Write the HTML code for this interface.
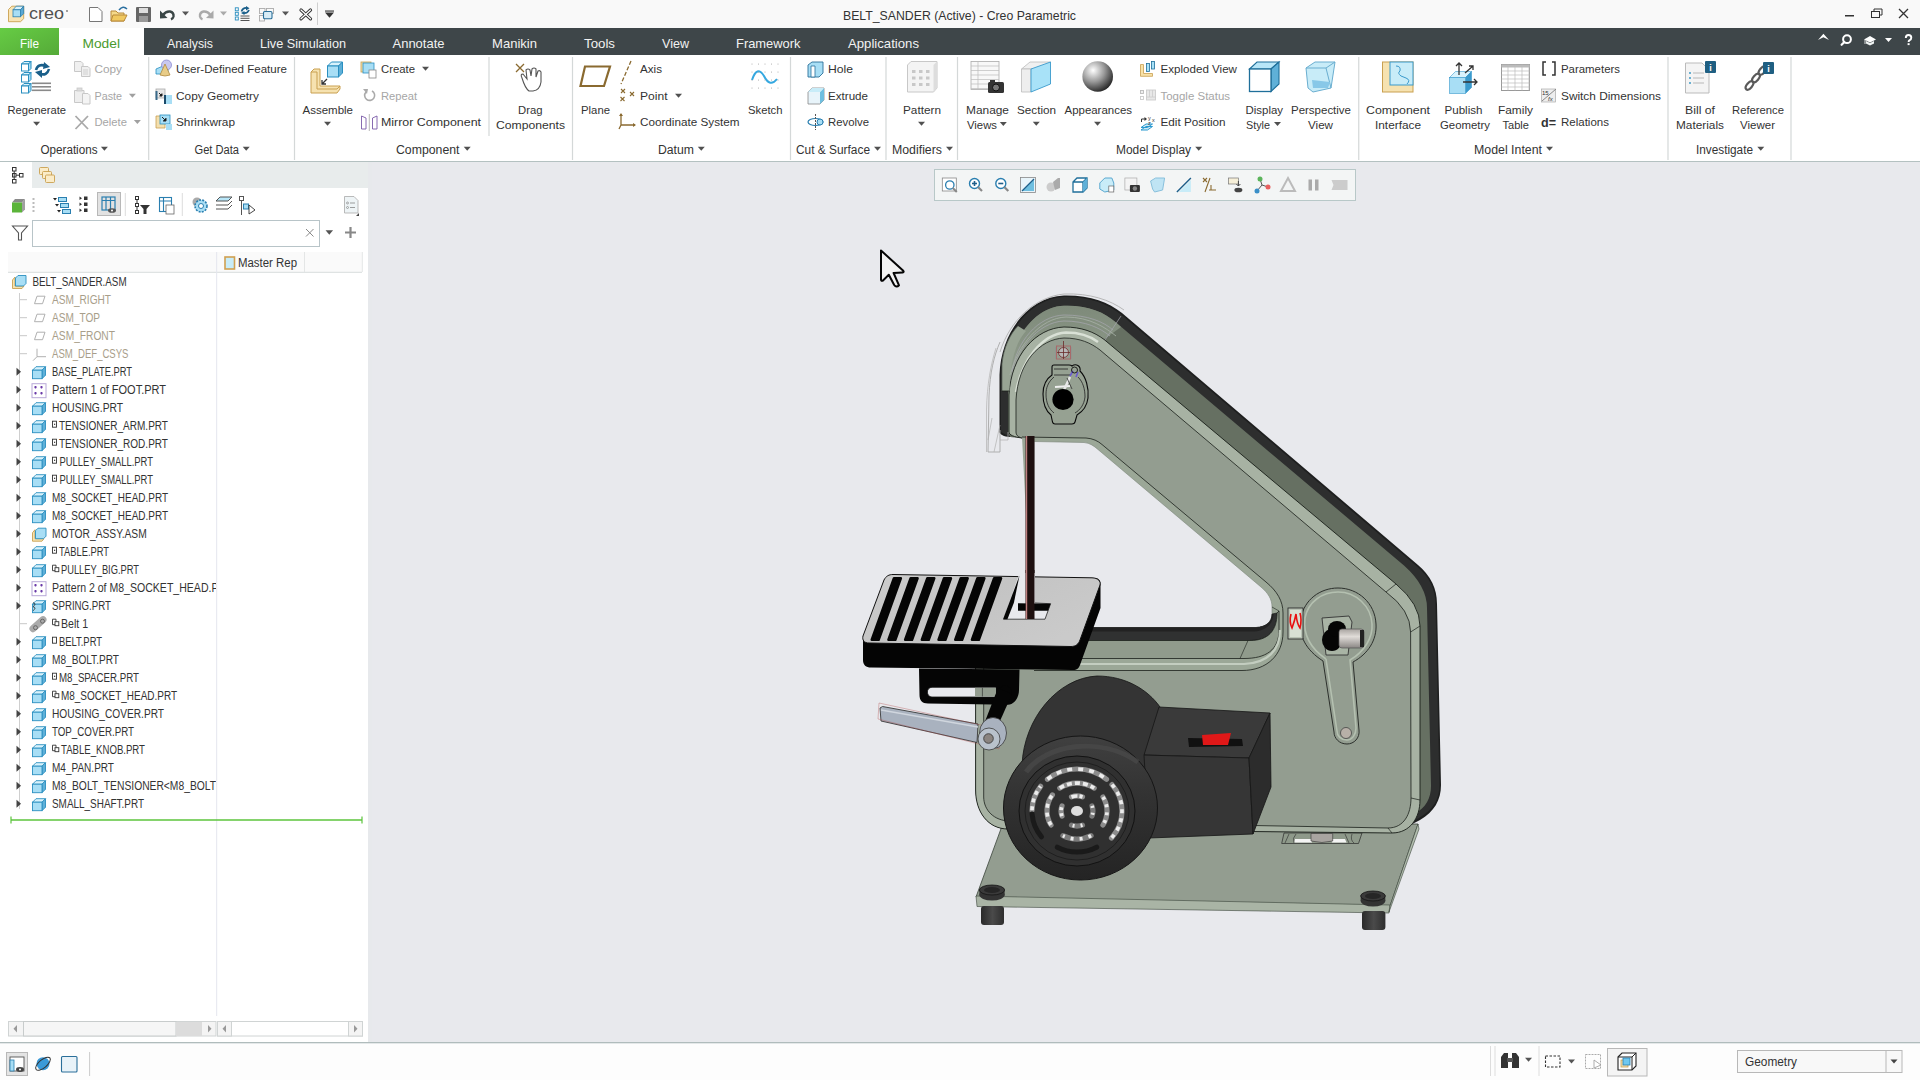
<!DOCTYPE html>
<html><head><meta charset="utf-8"><title>BELT_SANDER (Active) - Creo Parametric</title>
<style>
html,body{margin:0;padding:0;width:1920px;height:1080px;overflow:hidden;background:#e7e8ec;}
svg{position:absolute;left:0;top:0;display:block;}
text{font-family:"Liberation Sans", sans-serif;}
</style></head>
<body>
<svg width="1920" height="1080" viewBox="0 0 1920 1080">
<rect x="0" y="0" width="1920" height="28" fill="#f9f9f9" />
<path d="M8.5,9.5 L11.8,6.2 L23.7,6.2 L23.7,18.7 L20.5,21.7 L8.5,21.7 Z" fill="#f8e4b4" stroke="#c9a050" stroke-width="0.9"/><path d="M13,9.8 L16.2,6.2 L23.7,6.2 L20.5,9.8 Z" fill="#d8f2fc" stroke="#2a7fb0" stroke-width="0.8"/><path d="M20.5,9.8 L23.7,6.2 L23.7,13.5 L20.5,16.8 Z" fill="#5aa8d4" stroke="#2a7fb0" stroke-width="0.8"/><rect x="13" y="9.8" width="7.5" height="7" fill="#a8def5" stroke="#2a7fb0" stroke-width="0.8"/>
<text x="29" y="18.8" font-size="16.5" fill="#505050" text-anchor="start" font-weight="normal" textLength="35" lengthAdjust="spacingAndGlyphs" >creo</text>
<circle cx="67" cy="11" r="0.9" fill="#777"/>
<path d="M89.5,7.5 L98,7.5 L102,11.5 L102,21.5 L89.5,21.5 Z" fill="#fff" stroke="#777" stroke-width="1"/>
<path d="M111,11 L116,11 L118,13 L124,13 L124,21 L111,21 Z" fill="#f5d98a" stroke="#b8893a"/><path d="M113,15 L127,15 L124,21 L111,21 Z" fill="#f0c860" stroke="#b8893a"/><path d="M119,10 Q123,5 127,9" fill="none" stroke="#2a6fa0" stroke-width="1.5"/>
<rect x="136" y="7" width="15" height="15" fill="#666" rx="1"/><rect x="139" y="8" width="9" height="5" fill="#ddd"/><rect x="139" y="16" width="9" height="6" fill="#999"/>
<path d="M163,15 Q166,11 170,11.5 Q174,12.5 173.5,16.5 Q173,18.5 171,19.3" fill="none" stroke="#3a4646" stroke-width="2.4"/><path d="M160,10.5 L160,18.5 L167.5,18 Z" fill="#3a4646"/>
<path d="M182.0,11.5 L189.0,11.5 L185.5,15.5 Z" fill="#555"/>
<path d="M210.5,15 Q207.5,11 203.5,11.5 Q199.5,12.5 200,16.5 Q200.5,18.5 202.5,19.3" fill="none" stroke="#aaa" stroke-width="2.4"/><path d="M213.5,10.5 L213.5,18.5 L206,18 Z" fill="#aaa"/>
<path d="M220.0,11.5 L227.0,11.5 L223.5,15.5 Z" fill="#aaa"/>
<g fill="none" stroke="#2a8fc0" stroke-width="0.9"><rect x="235.3" y="7.8" width="3" height="3"/><rect x="235.3" y="12.3" width="3" height="3"/><rect x="235.3" y="17" width="3" height="3"/></g><g fill="#555"><rect x="240.5" y="15.5" width="9" height="1"/><rect x="240.5" y="17.8" width="9" height="1"/><rect x="240.5" y="20" width="9" height="1"/></g><path d="M241.5,11.5 Q243,7.5 247,8" fill="none" stroke="#1a5f8a" stroke-width="1.8"/><path d="M246,6 L249.5,8.3 L246,10.5 Z" fill="#1a5f8a"/><path d="M249,10 Q247.5,13.5 243.5,13" fill="none" stroke="#1a5f8a" stroke-width="1.8"/><path d="M244.5,11 L241,13 L244.5,15 Z" fill="#1a5f8a"/>
<rect x="259.5" y="8.5" width="5.5" height="5" fill="none" stroke="#aaa" stroke-width="0.9"/><rect x="266.5" y="8.5" width="7" height="5" fill="none" stroke="#aaa" stroke-width="0.9"/><rect x="259.5" y="15.5" width="5" height="5.5" fill="none" stroke="#aaa" stroke-width="0.9"/><rect x="263.5" y="11.5" width="8.5" height="7.3" rx="1.3" fill="#d8ecf6" stroke="#2a6f9a" stroke-width="1.1"/>
<path d="M282.0,11.5 L289.0,11.5 L285.5,15.5 Z" fill="#555"/>
<path d="M301,10 L310.5,18.8 M310.5,10 L301,18.8" stroke="#333" stroke-width="3.2" stroke-linecap="round"/><path d="M301,10 L310.5,18.8 M310.5,10 L301,18.8" stroke="#fff" stroke-width="1.2" stroke-linecap="round"/>
<line x1="317.5" y1="2.5" x2="317.5" y2="25" stroke="#cfcfcf" stroke-width="1" />
<path d="M325,12.5 L334,12.5 L329.5,17.8 Z" fill="#333"/><rect x="325" y="10.5" width="9" height="1.1" fill="#333"/>
<text x="843" y="19.5" font-size="13" fill="#333" text-anchor="start" font-weight="normal" textLength="233" lengthAdjust="spacingAndGlyphs" >BELT_SANDER (Active) - Creo Parametric</text>
<rect x="1845" y="15" width="9" height="1.5" fill="#333" />
<rect x="1871.5" y="11.5" width="8" height="6" fill="none" stroke="#333"/><path d="M1874,11.5 L1874,9 L1882,9 L1882,15 L1880,15" fill="none" stroke="#333"/>
<path d="M1899,9 L1908,18 M1908,9 L1899,18" stroke="#333" stroke-width="1.3"/>
<rect x="0" y="28" width="1920" height="27" fill="#3e4649" />
<defs><linearGradient id="gfile" x1="0" y1="0" x2="1" y2="1"><stop offset="0" stop-color="#66cc44"/><stop offset="1" stop-color="#55aa38"/></linearGradient></defs>
<rect x="0" y="28" width="59" height="27" fill="url(#gfile)" />
<rect x="59" y="28" width="85" height="27" fill="#ffffff" />
<text x="20" y="47.5" font-size="13.5" fill="#fff" text-anchor="start" font-weight="normal" textLength="19" lengthAdjust="spacingAndGlyphs" >File</text>
<text x="82.5" y="47.5" font-size="13.5" fill="#4a9a2e" text-anchor="start" font-weight="normal" textLength="37.5" lengthAdjust="spacingAndGlyphs" >Model</text>
<text x="167" y="47.5" font-size="13.5" fill="#f2f2f2" text-anchor="start" font-weight="normal" textLength="46" lengthAdjust="spacingAndGlyphs" >Analysis</text>
<text x="260" y="47.5" font-size="13.5" fill="#f2f2f2" text-anchor="start" font-weight="normal" textLength="86" lengthAdjust="spacingAndGlyphs" >Live Simulation</text>
<text x="392.5" y="47.5" font-size="13.5" fill="#f2f2f2" text-anchor="start" font-weight="normal" textLength="52.0" lengthAdjust="spacingAndGlyphs" >Annotate</text>
<text x="492" y="47.5" font-size="13.5" fill="#f2f2f2" text-anchor="start" font-weight="normal" textLength="45" lengthAdjust="spacingAndGlyphs" >Manikin</text>
<text x="584" y="47.5" font-size="13.5" fill="#f2f2f2" text-anchor="start" font-weight="normal" textLength="31" lengthAdjust="spacingAndGlyphs" >Tools</text>
<text x="662" y="47.5" font-size="13.5" fill="#f2f2f2" text-anchor="start" font-weight="normal" textLength="27" lengthAdjust="spacingAndGlyphs" >View</text>
<text x="736" y="47.5" font-size="13.5" fill="#f2f2f2" text-anchor="start" font-weight="normal" textLength="64.5" lengthAdjust="spacingAndGlyphs" >Framework</text>
<text x="848" y="47.5" font-size="13.5" fill="#f2f2f2" text-anchor="start" font-weight="normal" textLength="71" lengthAdjust="spacingAndGlyphs" >Applications</text>
<path d="M1818,40 L1823.4,33.8 L1829,40 L1823.4,37.3 Z" fill="#fff"/>
<circle cx="1847" cy="39.2" r="3.9" fill="none" stroke="#fff" stroke-width="2"/><path d="M1844.4,42 L1841.6,44.8" stroke="#fff" stroke-width="2.2" stroke-linecap="round"/>
<path d="M1864,39.5 L1870,36 L1876,39.5 L1870,42.5 Z" fill="#fff"/><path d="M1866,41 L1866,43.5 L1870,45.5 L1874,43.5 L1874,41 L1870,43 Z" fill="#f0f4f4"/><path d="M1865,40 L1865,44" stroke="#fff" stroke-width="0.8"/>
<path d="M1885,38 L1892,38 L1888.5,42 Z" fill="#fff"/>
<path d="M1905.8,38 Q1905.8,35 1908.5,35 Q1911.3,35 1911.3,37.8 Q1911.3,39.6 1909.4,40.4 Q1908.6,40.9 1908.6,42" fill="none" stroke="#fff" stroke-width="1.9"/><rect x="1907.6" y="43.2" width="2" height="1.9" fill="#fff"/>
<rect x="0" y="55" width="1920" height="106" fill="#ffffff" />
<rect x="0" y="161" width="1920" height="1.5" fill="#b4c1c1" />
<line x1="148.7" y1="57" x2="148.7" y2="160" stroke="#d4d8d8" stroke-width="1.2" />
<line x1="294.5" y1="57" x2="294.5" y2="160" stroke="#d4d8d8" stroke-width="1.2" />
<line x1="489" y1="57" x2="489" y2="136" stroke="#d4d8d8" stroke-width="1.2" />
<line x1="572.5" y1="57" x2="572.5" y2="160" stroke="#d4d8d8" stroke-width="1.2" />
<line x1="790.5" y1="57" x2="790.5" y2="160" stroke="#d4d8d8" stroke-width="1.2" />
<line x1="886" y1="57" x2="886" y2="160" stroke="#d4d8d8" stroke-width="1.2" />
<line x1="957.5" y1="57" x2="957.5" y2="160" stroke="#d4d8d8" stroke-width="1.2" />
<line x1="1358.75" y1="57" x2="1358.75" y2="160" stroke="#d4d8d8" stroke-width="1.2" />
<line x1="1668" y1="57" x2="1668" y2="160" stroke="#d4d8d8" stroke-width="1.2" />
<line x1="1791" y1="57" x2="1791" y2="160" stroke="#d4d8d8" stroke-width="1.2" />
<text x="40.5" y="154" font-size="12" fill="#333" text-anchor="start" font-weight="normal" textLength="57.0" lengthAdjust="spacingAndGlyphs" >Operations</text>
<path d="M100.9,146.7 L107.9,146.7 L104.4,150.7 Z" fill="#505050"/>
<text x="194.5" y="154" font-size="12" fill="#333" text-anchor="start" font-weight="normal" textLength="44.5" lengthAdjust="spacingAndGlyphs" >Get Data</text>
<path d="M242.7,146.7 L249.7,146.7 L246.2,150.7 Z" fill="#505050"/>
<text x="396" y="154" font-size="12" fill="#333" text-anchor="start" font-weight="normal" textLength="63.5" lengthAdjust="spacingAndGlyphs" >Component</text>
<path d="M463.7,146.7 L470.7,146.7 L467.2,150.7 Z" fill="#505050"/>
<text x="658" y="154" font-size="12" fill="#333" text-anchor="start" font-weight="normal" textLength="36" lengthAdjust="spacingAndGlyphs" >Datum</text>
<path d="M697.8,146.7 L704.8,146.7 L701.3,150.7 Z" fill="#505050"/>
<text x="796" y="154" font-size="12" fill="#333" text-anchor="start" font-weight="normal" textLength="74" lengthAdjust="spacingAndGlyphs" >Cut &amp; Surface</text>
<path d="M874.0,146.7 L881.0,146.7 L877.5,150.7 Z" fill="#505050"/>
<text x="892" y="154" font-size="12" fill="#333" text-anchor="start" font-weight="normal" textLength="50" lengthAdjust="spacingAndGlyphs" >Modifiers</text>
<path d="M946.0,146.7 L953.0,146.7 L949.5,150.7 Z" fill="#505050"/>
<text x="1116" y="154" font-size="12" fill="#333" text-anchor="start" font-weight="normal" textLength="75" lengthAdjust="spacingAndGlyphs" >Model Display</text>
<path d="M1195.2,146.7 L1202.2,146.7 L1198.7,150.7 Z" fill="#505050"/>
<text x="1474" y="154" font-size="12" fill="#333" text-anchor="start" font-weight="normal" textLength="68" lengthAdjust="spacingAndGlyphs" >Model Intent</text>
<path d="M1546.0,146.7 L1553.0,146.7 L1549.5,150.7 Z" fill="#505050"/>
<text x="1696" y="154" font-size="12" fill="#333" text-anchor="start" font-weight="normal" textLength="57" lengthAdjust="spacingAndGlyphs" >Investigate</text>
<path d="M1757.3,146.7 L1764.3,146.7 L1760.8,150.7 Z" fill="#505050"/>
<text x="7.5" y="113.8" font-size="11.8" fill="#333" text-anchor="start" font-weight="normal" textLength="58.5" lengthAdjust="spacingAndGlyphs" >Regenerate</text>
<path d="M33.1,121.8 L40.1,121.8 L36.6,125.8 Z" fill="#505050"/>
<text x="302.5" y="113.8" font-size="11.8" fill="#333" text-anchor="start" font-weight="normal" textLength="50.5" lengthAdjust="spacingAndGlyphs" >Assemble</text>
<path d="M324.0,121.8 L331.0,121.8 L327.5,125.8 Z" fill="#505050"/>
<text x="518" y="113.8" font-size="11.8" fill="#333" text-anchor="start" font-weight="normal" textLength="24.5" lengthAdjust="spacingAndGlyphs" >Drag</text>
<text x="496" y="128.5" font-size="11.8" fill="#333" text-anchor="start" font-weight="normal" textLength="69" lengthAdjust="spacingAndGlyphs" >Components</text>
<text x="581" y="113.8" font-size="11.8" fill="#333" text-anchor="start" font-weight="normal" textLength="29" lengthAdjust="spacingAndGlyphs" >Plane</text>
<text x="748" y="113.8" font-size="11.8" fill="#333" text-anchor="start" font-weight="normal" textLength="34.5" lengthAdjust="spacingAndGlyphs" >Sketch</text>
<text x="903" y="113.8" font-size="11.8" fill="#333" text-anchor="start" font-weight="normal" textLength="38" lengthAdjust="spacingAndGlyphs" >Pattern</text>
<path d="M918.0,121.8 L925.0,121.8 L921.5,125.8 Z" fill="#505050"/>
<text x="966" y="113.8" font-size="11.8" fill="#333" text-anchor="start" font-weight="normal" textLength="43" lengthAdjust="spacingAndGlyphs" >Manage</text>
<text x="967" y="128.5" font-size="11.8" fill="#333" text-anchor="start" font-weight="normal" textLength="30" lengthAdjust="spacingAndGlyphs" >Views</text>
<path d="M999.8,122.0 L1006.8,122.0 L1003.3,126.0 Z" fill="#505050"/>
<text x="1017" y="113.8" font-size="11.8" fill="#333" text-anchor="start" font-weight="normal" textLength="39" lengthAdjust="spacingAndGlyphs" >Section</text>
<path d="M1032.8,121.8 L1039.8,121.8 L1036.3,125.8 Z" fill="#505050"/>
<text x="1064.5" y="113.8" font-size="11.8" fill="#333" text-anchor="start" font-weight="normal" textLength="67.5" lengthAdjust="spacingAndGlyphs" >Appearances</text>
<path d="M1094.0,121.8 L1101.0,121.8 L1097.5,125.8 Z" fill="#505050"/>
<text x="1245.5" y="113.8" font-size="11.8" fill="#333" text-anchor="start" font-weight="normal" textLength="37.5" lengthAdjust="spacingAndGlyphs" >Display</text>
<text x="1246" y="128.5" font-size="11.8" fill="#333" text-anchor="start" font-weight="normal" textLength="24" lengthAdjust="spacingAndGlyphs" >Style</text>
<path d="M1274.0,122.0 L1281.0,122.0 L1277.5,126.0 Z" fill="#505050"/>
<text x="1291" y="113.8" font-size="11.8" fill="#333" text-anchor="start" font-weight="normal" textLength="60" lengthAdjust="spacingAndGlyphs" >Perspective</text>
<text x="1308" y="128.5" font-size="11.8" fill="#333" text-anchor="start" font-weight="normal" textLength="25" lengthAdjust="spacingAndGlyphs" >View</text>
<text x="1366" y="113.8" font-size="11.8" fill="#333" text-anchor="start" font-weight="normal" textLength="64" lengthAdjust="spacingAndGlyphs" >Component</text>
<text x="1375" y="128.5" font-size="11.8" fill="#333" text-anchor="start" font-weight="normal" textLength="46" lengthAdjust="spacingAndGlyphs" >Interface</text>
<text x="1444.5" y="113.8" font-size="11.8" fill="#333" text-anchor="start" font-weight="normal" textLength="38.0" lengthAdjust="spacingAndGlyphs" >Publish</text>
<text x="1440" y="128.5" font-size="11.8" fill="#333" text-anchor="start" font-weight="normal" textLength="50" lengthAdjust="spacingAndGlyphs" >Geometry</text>
<text x="1498" y="113.8" font-size="11.8" fill="#333" text-anchor="start" font-weight="normal" textLength="35" lengthAdjust="spacingAndGlyphs" >Family</text>
<text x="1502.5" y="128.5" font-size="11.8" fill="#333" text-anchor="start" font-weight="normal" textLength="26.5" lengthAdjust="spacingAndGlyphs" >Table</text>
<text x="1685" y="113.8" font-size="11.8" fill="#333" text-anchor="start" font-weight="normal" textLength="30" lengthAdjust="spacingAndGlyphs" >Bill of</text>
<text x="1676" y="128.5" font-size="11.8" fill="#333" text-anchor="start" font-weight="normal" textLength="48" lengthAdjust="spacingAndGlyphs" >Materials</text>
<text x="1732" y="113.8" font-size="11.8" fill="#333" text-anchor="start" font-weight="normal" textLength="52" lengthAdjust="spacingAndGlyphs" >Reference</text>
<text x="1740" y="128.5" font-size="11.8" fill="#333" text-anchor="start" font-weight="normal" textLength="35" lengthAdjust="spacingAndGlyphs" >Viewer</text>
<text x="94.5" y="73" font-size="11.8" fill="#a6a6a6" text-anchor="start" font-weight="normal" textLength="27.5" lengthAdjust="spacingAndGlyphs" >Copy</text>
<text x="94.5" y="99.5" font-size="11.8" fill="#a6a6a6" text-anchor="start" font-weight="normal" textLength="27.5" lengthAdjust="spacingAndGlyphs" >Paste</text>
<path d="M128.9,93.8 L135.9,93.8 L132.4,97.8 Z" fill="#a0a0a0"/>
<text x="94.5" y="126" font-size="11.8" fill="#a6a6a6" text-anchor="start" font-weight="normal" textLength="32.5" lengthAdjust="spacingAndGlyphs" >Delete</text>
<path d="M133.9,120.0 L140.9,120.0 L137.4,124.0 Z" fill="#a0a0a0"/>
<text x="176" y="73" font-size="11.8" fill="#333" text-anchor="start" font-weight="normal" textLength="111" lengthAdjust="spacingAndGlyphs" >User-Defined Feature</text>
<text x="176" y="99.5" font-size="11.8" fill="#333" text-anchor="start" font-weight="normal" textLength="83" lengthAdjust="spacingAndGlyphs" >Copy Geometry</text>
<text x="176" y="126" font-size="11.8" fill="#333" text-anchor="start" font-weight="normal" textLength="59" lengthAdjust="spacingAndGlyphs" >Shrinkwrap</text>
<text x="381" y="73" font-size="11.8" fill="#333" text-anchor="start" font-weight="normal" textLength="34" lengthAdjust="spacingAndGlyphs" >Create</text>
<path d="M422.0,66.8 L429.0,66.8 L425.5,70.8 Z" fill="#505050"/>
<text x="381" y="99.5" font-size="11.8" fill="#a6a6a6" text-anchor="start" font-weight="normal" textLength="36" lengthAdjust="spacingAndGlyphs" >Repeat</text>
<text x="381" y="126" font-size="11.8" fill="#333" text-anchor="start" font-weight="normal" textLength="100" lengthAdjust="spacingAndGlyphs" >Mirror Component</text>
<text x="640" y="73" font-size="11.8" fill="#333" text-anchor="start" font-weight="normal" textLength="22" lengthAdjust="spacingAndGlyphs" >Axis</text>
<text x="640" y="99.5" font-size="11.8" fill="#333" text-anchor="start" font-weight="normal" textLength="27.5" lengthAdjust="spacingAndGlyphs" >Point</text>
<path d="M675.0,93.8 L682.0,93.8 L678.5,97.8 Z" fill="#505050"/>
<text x="640" y="126" font-size="11.8" fill="#333" text-anchor="start" font-weight="normal" textLength="99.5" lengthAdjust="spacingAndGlyphs" >Coordinate System</text>
<text x="828" y="73" font-size="11.8" fill="#333" text-anchor="start" font-weight="normal" textLength="25" lengthAdjust="spacingAndGlyphs" >Hole</text>
<text x="828" y="99.5" font-size="11.8" fill="#333" text-anchor="start" font-weight="normal" textLength="40" lengthAdjust="spacingAndGlyphs" >Extrude</text>
<text x="828" y="126" font-size="11.8" fill="#333" text-anchor="start" font-weight="normal" textLength="41" lengthAdjust="spacingAndGlyphs" >Revolve</text>
<text x="1160.5" y="73" font-size="11.8" fill="#333" text-anchor="start" font-weight="normal" textLength="76.5" lengthAdjust="spacingAndGlyphs" >Exploded View</text>
<text x="1160.5" y="99.5" font-size="11.8" fill="#a6a6a6" text-anchor="start" font-weight="normal" textLength="69.5" lengthAdjust="spacingAndGlyphs" >Toggle Status</text>
<text x="1160.5" y="126" font-size="11.8" fill="#333" text-anchor="start" font-weight="normal" textLength="65.0" lengthAdjust="spacingAndGlyphs" >Edit Position</text>
<text x="1561" y="73" font-size="11.8" fill="#333" text-anchor="start" font-weight="normal" textLength="59" lengthAdjust="spacingAndGlyphs" >Parameters</text>
<text x="1561" y="99.5" font-size="11.8" fill="#333" text-anchor="start" font-weight="normal" textLength="100" lengthAdjust="spacingAndGlyphs" >Switch Dimensions</text>
<text x="1561" y="126" font-size="11.8" fill="#333" text-anchor="start" font-weight="normal" textLength="48" lengthAdjust="spacingAndGlyphs" >Relations</text>
<path d="M21.5,64.0 L24.0,61.5 L31.0,61.5 L28.5,64.0 Z" fill="#d8f2fc" stroke="#2a8fc0" stroke-width="1" stroke-linejoin="round"/>
<path d="M28.5,64.0 L31.0,61.5 L31.0,68.5 L28.5,71.0 Z" fill="#a8def5" stroke="#2a8fc0" stroke-width="1" stroke-linejoin="round"/>
<rect x="21.5" y="64.0" width="7" height="7" fill="#fff" stroke="#2a8fc0" stroke-width="1"/>
<path d="M21.5,75.0 L24.0,72.5 L31.0,72.5 L28.5,75.0 Z" fill="#d8f2fc" stroke="#2a8fc0" stroke-width="1" stroke-linejoin="round"/>
<path d="M28.5,75.0 L31.0,72.5 L31.0,79.5 L28.5,82.0 Z" fill="#a8def5" stroke="#2a8fc0" stroke-width="1" stroke-linejoin="round"/>
<rect x="21.5" y="75.0" width="7" height="7" fill="#fff" stroke="#2a8fc0" stroke-width="1"/>
<path d="M21.5,86.0 L24.0,83.5 L31.0,83.5 L28.5,86.0 Z" fill="#d8f2fc" stroke="#2a8fc0" stroke-width="1" stroke-linejoin="round"/>
<path d="M28.5,86.0 L31.0,83.5 L31.0,90.5 L28.5,93.0 Z" fill="#a8def5" stroke="#2a8fc0" stroke-width="1" stroke-linejoin="round"/>
<rect x="21.5" y="86.0" width="7" height="7" fill="#fff" stroke="#2a8fc0" stroke-width="1"/>
<rect x="32" y="82.5" width="19" height="1.6" fill="#8a8a8a" />
<rect x="32" y="86" width="19" height="1.6" fill="#8a8a8a" />
<rect x="32" y="89.5" width="19" height="1.6" fill="#8a8a8a" />
<path d="M36,70 Q38,63 46,66" fill="none" stroke="#1a5f8a" stroke-width="2.6"/><path d="M44,62 L50,67 L43,69 Z" fill="#1a5f8a"/><path d="M49,69 Q47,76 40,74" fill="none" stroke="#1a5f8a" stroke-width="2.6"/><path d="M42,78 L35,72 L42,70 Z" fill="#1a5f8a"/>
<path d="M74.5,61.5 L81,61.5 L83,63.5 L83,71.5 L74.5,71.5 Z" fill="#f0f0f0" stroke="#c8c8c8"/><path d="M81.5,66.5 L88,66.5 L90,68.5 L90,76.5 L81.5,76.5 Z" fill="#f0f0f0" stroke="#c8c8c8"/><path d="M83,70 L88,70 M83,72 L88,72 M83,74 L88,74" stroke="#c8c8c8" stroke-width="0.8"/>
<path d="M74.5,90.5 L84,90.5 L84,102.5 L74.5,102.5 Z" fill="#eee" stroke="#c8c8c8"/><rect x="77" y="88" width="5" height="3" fill="#ddd" stroke="#c8c8c8" stroke-width="0.8"/><path d="M82.5,93.5 L88,93.5 L90,95.5 L90,104 L82.5,104 Z" fill="#f4f4f4" stroke="#c8c8c8"/>
<path d="M75.5,116 L88,129 M88,116 L75.5,129" stroke="#a9a9a9" stroke-width="1.8"/>
<path d="M156,69 L163,66 L168,69 L168,74 L156,74 Z" fill="#a8def5" stroke="#2a8fc0" stroke-width="0.8"/><circle cx="166.5" cy="65" r="5" fill="#c8c8f0" stroke="#8a8ad0" stroke-width="0.8"/><path d="M165,64 L170,75 Q165,77 160,75 Z" fill="#e8cc88" stroke="#b08a40" stroke-width="0.8"/>
<rect x="156" y="89" width="9" height="9" fill="#e6e6e6" stroke="#aaa" stroke-width="0.8"/><rect x="155.5" y="91" width="2" height="9" fill="#3a6a8a"/><rect x="164" y="95" width="8" height="9" fill="#a8def5"/><rect x="164" y="95" width="2" height="9" fill="#1b4a6a"/><path d="M159,93 L162,96 M162,93.5 L162,96 L159.5,96" stroke="#222" stroke-width="1"/>
<path d="M156,116 L165,116 L165,128 L156,128 Z" fill="#f3dfae" stroke="#c9a050" stroke-width="0.8"/><rect x="160" y="115" width="10" height="9" fill="#a8def5" stroke="#2a8fc0" stroke-width="0.8"/><rect x="166" y="124" width="6" height="6" fill="#a8def5"/><path d="M162,117 L166,121 M166,118 L166,121 L163,121" stroke="#222" stroke-width="1"/>
<path d="M311,72 L314,69 L320,69 L320,86 L340,86 L340,89 L337,93 L311,93 Z" fill="#f6e2b0" stroke="#c9a050" stroke-width="1"/><path d="M311,72 L317,72 L317,89 L337,89 L340,86" fill="none" stroke="#c9a050" stroke-width="1"/>
<path d="M327.5,66 L331.5,62 L342.5,62 L338.5,66 Z" fill="#d8f2fc" stroke="#2a8fc0" stroke-width="1" stroke-linejoin="round"/>
<path d="M338.5,66 L342.5,62 L342.5,73 L338.5,77 Z" fill="#5fb0d8" stroke="#2a8fc0" stroke-width="1" stroke-linejoin="round"/>
<rect x="327.5" y="66" width="11" height="11" fill="#a8def5" stroke="#2a8fc0" stroke-width="1"/>
<path d="M327,79 L322,84 M322,80 L322,84 L326,84" stroke="#333" stroke-width="1.3" fill="none"/>
<rect x="361" y="62" width="10" height="10" fill="#f3dfae" stroke="#c9a050" stroke-width="0.8"/><rect x="363" y="63" width="11" height="10" fill="#a8def5" stroke="#2a8fc0" stroke-width="0.8"/><rect x="369" y="70" width="7" height="8" fill="#fff" stroke="#888" stroke-width="0.8"/>
<path d="M366,92 A5,5 0 1,0 372,91" fill="none" stroke="#aaa" stroke-width="1.6"/><path d="M363,89 L368,89 L367,94 Z" fill="#aaa"/>
<path d="M361.5,116 L366,118 L366,129 L361.5,129 Z" fill="none" stroke="#7a5aa8" stroke-width="0.9"/><path d="M377,116 L372.5,118 L372.5,129 L377,129 Z" fill="none" stroke="#7a5aa8" stroke-width="0.9"/><line x1="369.3" y1="114" x2="369.3" y2="131" stroke="#999" stroke-width="0.7"/>
<path d="M516,64 L524,72 M524,64 L516,72" stroke="#8a6a30" stroke-width="1.3"/><path d="M522,78 Q520,74 523,74 L527,79 L526,70 Q528,68 530,70 L531,76 L532,69 Q534,67 536,69 L536,77 L538,71 Q540,70 541,72 L541,82 Q540,90 533,91 L529,91 Q525,88 522,78 Z" fill="#fff" stroke="#555" stroke-width="1.1"/>
<path d="M585,66.5 L610,66.5 L604,86 L580.5,86 Z" fill="none" stroke="#8a6a30" stroke-width="2.2"/>
<path d="M631,61 L621,84" stroke="#8a6a30" stroke-width="1.3" stroke-dasharray="4,2"/>
<g stroke="#8a6a30" stroke-width="1.1"><path d="M621,89 L625,93 M625,89 L621,93"/><path d="M630,92 L634,96 M634,92 L630,96"/><path d="M620.5,97 L624.5,101 M624.5,97 L620.5,101"/></g>
<path d="M621,114 L621,125 L635,125 M621,125 L619,129" fill="none" stroke="#8a6a30" stroke-width="1.3"/><path d="M619,116 L621,113 L623,116 Z M633,123 L636,125 L633,127 Z" fill="#8a6a30"/>
<path d="M752,80 Q757,65 764,76 Q770,88 777,79" fill="none" stroke="#35a8e0" stroke-width="2"/>
<circle cx="752.0" cy="64" r="0.5" fill="#999"/>
<circle cx="752.0" cy="72" r="0.5" fill="#999"/>
<circle cx="752.0" cy="80" r="0.5" fill="#999"/>
<circle cx="752.0" cy="88" r="0.5" fill="#999"/>
<circle cx="758.5" cy="64" r="0.5" fill="#999"/>
<circle cx="758.5" cy="72" r="0.5" fill="#999"/>
<circle cx="758.5" cy="80" r="0.5" fill="#999"/>
<circle cx="758.5" cy="88" r="0.5" fill="#999"/>
<circle cx="765.0" cy="64" r="0.5" fill="#999"/>
<circle cx="765.0" cy="72" r="0.5" fill="#999"/>
<circle cx="765.0" cy="80" r="0.5" fill="#999"/>
<circle cx="765.0" cy="88" r="0.5" fill="#999"/>
<circle cx="771.5" cy="64" r="0.5" fill="#999"/>
<circle cx="771.5" cy="72" r="0.5" fill="#999"/>
<circle cx="771.5" cy="80" r="0.5" fill="#999"/>
<circle cx="771.5" cy="88" r="0.5" fill="#999"/>
<circle cx="778.0" cy="64" r="0.5" fill="#999"/>
<circle cx="778.0" cy="72" r="0.5" fill="#999"/>
<circle cx="778.0" cy="80" r="0.5" fill="#999"/>
<circle cx="778.0" cy="88" r="0.5" fill="#999"/>
<path d="M808,65 L812,62 L823,62 L823,73 L819,77 L808,77 Z" fill="#a8def5" stroke="#2a6f9a" stroke-width="0.9"/><path d="M811,66 L815,66 L815,77 L811,77 Z" fill="#fff" stroke="#2a6f9a" stroke-width="0.8"/>
<path d="M808,92 L812,88 L824,88 L824,100 L820,104 L808,104 Z" fill="#e8f4fa" stroke="#888" stroke-width="0.8"/><path d="M820,92 L824,88 L824,100 L820,104 Z" fill="#6fbfe0"/><path d="M808,92 L812,88 L824,88 L820,92 Z" fill="#c8ecf8"/>
<ellipse cx="815.5" cy="122" rx="7.5" ry="3.5" fill="none" stroke="#2a7fb0" stroke-width="1.2"/><circle cx="820" cy="122" r="3" fill="#a8def5" stroke="#2a7fb0"/><line x1="815.5" y1="114" x2="815.5" y2="130" stroke="#555" stroke-dasharray="2,1"/>
<path d="M907.5,65 L911,61.5 L937,61.5 L937,88 L933.5,92 L907.5,92 Z" fill="#f4f4f4" stroke="#c8c8c8"/><path d="M933.5,65 L937,61.5 L937,88 L933.5,92 Z" fill="#ddd"/>
<rect x="912" y="70.0" width="3.5" height="3" fill="#c8c8c8" />
<rect x="912" y="76.5" width="3.5" height="3" fill="#c8c8c8" />
<rect x="912" y="83.0" width="3.5" height="3" fill="#c8c8c8" />
<rect x="919" y="70.0" width="3.5" height="3" fill="#c8c8c8" />
<rect x="919" y="76.5" width="3.5" height="3" fill="#c8c8c8" />
<rect x="919" y="83.0" width="3.5" height="3" fill="#c8c8c8" />
<rect x="926" y="70.0" width="3.5" height="3" fill="#c8c8c8" />
<rect x="926" y="76.5" width="3.5" height="3" fill="#c8c8c8" />
<rect x="926" y="83.0" width="3.5" height="3" fill="#c8c8c8" />
<rect x="971" y="61.5" width="28" height="28" fill="#f8f8f8" stroke="#aaa" stroke-width="0.8"/>
<line x1="971" y1="66.0" x2="999" y2="66.0" stroke="#bbb" stroke-width="0.7" />
<line x1="971" y1="70.5" x2="999" y2="70.5" stroke="#bbb" stroke-width="0.7" />
<line x1="971" y1="75.0" x2="999" y2="75.0" stroke="#bbb" stroke-width="0.7" />
<line x1="971" y1="79.5" x2="999" y2="79.5" stroke="#bbb" stroke-width="0.7" />
<line x1="971" y1="84.0" x2="999" y2="84.0" stroke="#bbb" stroke-width="0.7" />
<line x1="971" y1="88.5" x2="999" y2="88.5" stroke="#bbb" stroke-width="0.7" />
<line x1="978" y1="61.5" x2="978" y2="89.5" stroke="#bbb" stroke-width="0.7" />
<rect x="988" y="82" width="16" height="11" rx="1.5" fill="#333"/><circle cx="996" cy="87.5" r="3.5" fill="#777" stroke="#111"/><rect x="990" y="80" width="5" height="3" fill="#333"/>
<path d="M1021.5,69 L1030,62 L1050.5,62 L1042,69 Z" fill="#f0f0f0" stroke="#bbb" stroke-width="0.8"/><path d="M1021.5,69 L1031,69 L1031,92 L1021.5,92 Z" fill="#eee" stroke="#bbb" stroke-width="0.8"/><path d="M1031,69 L1050.5,62 L1050.5,84 L1031,92 Z" fill="#a8e2f8" stroke="#3a9acc" stroke-width="0.9"/>
<defs><radialGradient id="gsph" cx="0.35" cy="0.3" r="0.75"><stop offset="0" stop-color="#ffffff"/><stop offset="0.5" stop-color="#999"/><stop offset="1" stop-color="#222"/></radialGradient></defs><circle cx="1097.7" cy="76.5" r="15.3" fill="url(#gsph)"/>
<path d="M1140.5,64.5 L1143.5,64.5 L1143.5,73.5 L1152.5,73.5 L1152.5,76.3 L1140.5,76.3 Z" fill="#f8e2a8" stroke="#c9a050" stroke-width="0.8"/><rect x="1146.5" y="63.5" width="3" height="8" fill="#a8e2f8" stroke="#1f6f9a" stroke-width="0.8"/><rect x="1151.5" y="61.5" width="3" height="7.5" fill="#a8e2f8" stroke="#1f6f9a" stroke-width="0.8"/>
<rect x="1140.5" y="90.5" width="3" height="3" fill="none" stroke="#bbb" stroke-width="0.9"/><rect x="1141.6" y="91.6" width="0.8" height="0.8" fill="#999"/><rect x="1140.5" y="96.5" width="3" height="3" fill="none" stroke="#ccc" stroke-width="0.9"/><rect x="1146.5" y="90" width="9" height="10" fill="#e8e8e8" stroke="#ccc" stroke-width="0.9"/><path d="M1149.5,90 L1149.5,97 M1152.5,90 L1152.5,97 M1146.5,97 L1155.5,97" stroke="#ccc" stroke-width="0.8"/>
<path d="M1141,127.5 L1146,124 L1152.5,124 L1147.5,127.5 Z M1141,130 L1146,126.5 L1152.5,126.5 L1147.5,130 Z" fill="#cfe9f5" stroke="#2a9ad0" stroke-width="1"/><path d="M1141.5,122 L1141.5,119 L1145,119" fill="none" stroke="#333" stroke-width="1"/><path d="M1144.5,117 L1147,119 L1144.5,121 Z" fill="#333"/><text x="1148" y="120" font-size="5.5" fill="#333">y</text><text x="1148" y="125" font-size="5.5" fill="#333">z</text><text x="1152" y="122" font-size="5.5" fill="#333">x</text>
<path d="M1249.5,69 L1257,62 L1279,62 L1271,69 Z" fill="#b8e6f8" stroke="#1f6f9a" stroke-width="1.1"/><path d="M1271,69 L1279,62 L1279,84 L1271,91.5 Z" fill="#5fb0d8" stroke="#1f6f9a" stroke-width="1.1"/><rect x="1249.5" y="69" width="21.5" height="22.5" fill="#fff" stroke="#1f6f9a" stroke-width="1.3"/>
<path d="M1306,68 L1315,62 L1335,62 L1331,88 L1313,92 L1308,88 Z" fill="#c8ecf8" stroke="#6aaed0" stroke-width="1"/><path d="M1306,68 L1326,68 L1331,88 M1326,68 L1335,62" fill="none" stroke="#6aaed0" stroke-width="1"/><path d="M1312,80 L1330,82 L1328,88 L1313,88 Z" fill="#88c8e8"/>
<rect x="1382.5" y="62" width="30.5" height="30" fill="#f6e2b0" stroke="#c9a050"/><rect x="1390" y="62" width="23" height="23" fill="#c8ecf8" stroke="#3a9acc"/><path d="M1396,66 Q1401,66 1400,71 Q1397,73 1401,76 L1406,78 Q1411,80 1407,84" fill="none" stroke="#3a9acc" stroke-width="1"/>
<path d="M1449.5,77.5 L1455.5,71.5 L1471.5,71.5 L1465.5,77.5 Z" fill="#d8f2fc" stroke="#3a9acc" stroke-width="0.6" stroke-linejoin="round"/>
<path d="M1465.5,77.5 L1471.5,71.5 L1471.5,87.5 L1465.5,93.5 Z" fill="#3a9acc" stroke="#3a9acc" stroke-width="0.6" stroke-linejoin="round"/>
<rect x="1449.5" y="77.5" width="16" height="16" fill="#a8def5" stroke="#3a9acc" stroke-width="0.6"/>
<path d="M1459,75 L1459,63 M1456,66 L1459,63 L1462,66 M1465,73 L1473,66 M1469,66 L1473,66 L1473,70 M1463,82 L1477,82 M1474,79 L1477,82 L1474,85" fill="none" stroke="#333" stroke-width="1.3"/>
<rect x="1501.5" y="64.5" width="28" height="26" fill="#fff" stroke="#999"/><rect x="1501.5" y="64.5" width="28" height="3" fill="#bbb"/>
<line x1="1501.5" y1="71" x2="1529.5" y2="71" stroke="#bbb" stroke-width="0.7" />
<line x1="1501.5" y1="75" x2="1529.5" y2="75" stroke="#bbb" stroke-width="0.7" />
<line x1="1501.5" y1="79" x2="1529.5" y2="79" stroke="#bbb" stroke-width="0.7" />
<line x1="1501.5" y1="83" x2="1529.5" y2="83" stroke="#bbb" stroke-width="0.7" />
<line x1="1501.5" y1="87" x2="1529.5" y2="87" stroke="#bbb" stroke-width="0.7" />
<line x1="1508" y1="64.5" x2="1508" y2="90.5" stroke="#bbb" stroke-width="0.7" />
<line x1="1515" y1="64.5" x2="1515" y2="90.5" stroke="#bbb" stroke-width="0.7" />
<line x1="1522" y1="64.5" x2="1522" y2="90.5" stroke="#bbb" stroke-width="0.7" />
<line x1="1529" y1="64.5" x2="1529" y2="90.5" stroke="#bbb" stroke-width="0.7" />
<path d="M1546,62 L1543,62 L1543,75 L1546,75 M1552,62 L1555,62 L1555,75 L1552,75" fill="none" stroke="#333" stroke-width="1.5"/>
<rect x="1541.5" y="89" width="14" height="13" fill="#eee" stroke="#aaa" stroke-width="0.7"/><path d="M1542,101 L1556,89" stroke="#888"/><text x="1542" y="95" font-size="6" fill="#333">15</text><text x="1548" y="101" font-size="6" fill="#333" font-style="italic">fx</text>
<text x="1541" y="127" font-size="13" font-weight="bold" fill="#333" textLength="15" lengthAdjust="spacingAndGlyphs">d=</text>
<path d="M1685.5,63 L1702,63 L1709,70 L1709,93 L1685.5,93 Z" fill="#f4f4f4" stroke="#bbb"/>
<circle cx="1690" cy="73" r="0.9" fill="#2a8fc0"/>
<line x1="1693" y1="73" x2="1704" y2="73" stroke="#aaa" stroke-width="0.8" />
<circle cx="1690" cy="78" r="0.9" fill="#2a8fc0"/>
<line x1="1693" y1="78" x2="1704" y2="78" stroke="#aaa" stroke-width="0.8" />
<circle cx="1690" cy="83" r="0.9" fill="#2a8fc0"/>
<line x1="1693" y1="83" x2="1704" y2="83" stroke="#aaa" stroke-width="0.8" />
<rect x="1705" y="61" width="11" height="12" rx="1" fill="#1f5f82"/><text x="1710.5" y="70.5" font-size="9" font-weight="bold" fill="#fff" text-anchor="middle">i</text>
<g fill="none" stroke="#5a5a5a" stroke-width="2.2"><ellipse cx="1749.5" cy="85.5" rx="5" ry="2.6" transform="rotate(-50 1749.5 85.5)"/><ellipse cx="1756" cy="78" rx="5" ry="2.6" transform="rotate(-50 1756 78)"/><ellipse cx="1762.5" cy="70.5" rx="5" ry="2.6" transform="rotate(-50 1762.5 70.5)"/></g>
<rect x="1763" y="62" width="11" height="12" rx="1" fill="#1f5f82"/><text x="1768.5" y="71.5" font-size="9" font-weight="bold" fill="#fff" text-anchor="middle">i</text>
<rect x="0" y="162" width="368" height="880" fill="#ffffff" />
<rect x="32" y="162" width="336" height="26" fill="#e8ecec" />
<rect x="368" y="162" width="4" height="880" fill="#e7e9ec" />
<g fill="none" stroke="#333" stroke-width="1"><rect x="12.5" y="167.5" width="3.5" height="3.5"/><rect x="12.5" y="173.5" width="3.5" height="3.5"/><rect x="12.5" y="179.5" width="3.5" height="3.5"/><rect x="19.5" y="173.5" width="3.5" height="3.5"/><path d="M14.2,171 L14.2,179.5 M16,175.2 L19.5,175.2"/></g>
<g stroke="#c9a050" stroke-width="0.9" fill="#fbecc8"><rect x="39.5" y="167.5" width="9" height="7" rx="1"/><rect x="42.5" y="171.5" width="9" height="7" rx="1"/><rect x="45.5" y="175" width="9" height="7.5" rx="1"/></g>
<path d="M12,202.5 L15,199 L25,199 L22,202.5 Z" fill="#8a8a8a"/><path d="M22,202.5 L25,199 L25,209.5 L22,212.5 Z" fill="#a0a0a0"/><rect x="12" y="202.5" width="10" height="10" fill="#5bb43a"/>
<rect x="32.5" y="198" width="2" height="2" fill="#bbb" />
<rect x="32.5" y="202" width="2" height="2" fill="#bbb" />
<rect x="32.5" y="206" width="2" height="2" fill="#bbb" />
<rect x="32.5" y="210" width="2" height="2" fill="#bbb" />
<g fill="#a8def5" stroke="#2a7fb0" stroke-width="1"><rect x="58.5" y="197.5" width="8" height="4"/><rect x="60.5" y="203.5" width="8" height="4"/><rect x="62.5" y="209.5" width="8" height="4"/></g><path d="M53,198 L57,198 L55,200.5 Z M55,204 L59,204 L57,206.5 Z M57,210 L61,210 L59,212.5 Z" fill="#222"/>
<g fill="#333"><rect x="84" y="196.5" width="3.5" height="3.5"/><rect x="84" y="202.5" width="3.5" height="3.5"/><rect x="84" y="208.5" width="3.5" height="3.5"/><path d="M79.5,196.5 L82,198.2 L79.5,200 Z M79.5,202.5 L82,204.2 L79.5,206 Z M79.5,208.5 L82,210.2 L79.5,212 Z"/></g>
<rect x="97.5" y="192.5" width="23" height="23" fill="#e2e2e2" stroke="#b8b8b8"/><g fill="none" stroke="#2a7fb0" stroke-width="1.2"><rect x="102" y="197" width="13" height="13"/><path d="M102,200.5 L115,200.5 M106,197 L106,210 M110.5,197 L110.5,210"/></g><ellipse cx="112" cy="210.5" rx="4" ry="2.3" fill="#555"/><circle cx="112" cy="210.5" r="1" fill="#fff"/>
<line x1="125.3" y1="193" x2="125.3" y2="216" stroke="#ddd" stroke-width="1" />
<g fill="none" stroke="#333" stroke-width="1"><rect x="135.5" y="196.5" width="3" height="3"/><rect x="135.5" y="203.5" width="3" height="3"/><rect x="135.5" y="210.5" width="3" height="3"/><path d="M137,199.5 L137,203.5 M137,206.5 L137,210.5"/></g><path d="M140,205 L150,205 L146.5,209 L146.5,214 L143.5,214 L143.5,209 Z" fill="#333"/>
<g fill="none" stroke="#2a7fb0" stroke-width="1.1"><rect x="159.5" y="197.5" width="12" height="14"/><path d="M159.5,201 L171.5,201 M163.5,197.5 L163.5,211.5"/></g><rect x="166" y="205" width="8" height="9" fill="#fff" stroke="#666" stroke-width="0.8"/>
<line x1="182.3" y1="193" x2="182.3" y2="216" stroke="#ddd" stroke-width="1" />
<circle cx="197" cy="202" r="4.5" fill="#aaa"/><circle cx="201" cy="206" r="6" fill="#a8def5" stroke="#2a7fb0" stroke-width="1.6" stroke-dasharray="2,1.2"/><circle cx="201" cy="206" r="2.5" fill="#fff" stroke="#2a7fb0"/>
<g stroke="#555" stroke-width="1" fill="#b8e6f8"><path d="M216,201 L220,197 L232,197 L228,201 Z"/></g><path d="M216,205 L228,205 L232,201 M216,209 L228,209 L232,205" fill="none" stroke="#555"/>
<rect x="239.5" y="196.5" width="4" height="4" fill="none" stroke="#555"/><path d="M241.5,200.5 L241.5,215" stroke="#555"/><rect x="243.5" y="204" width="5" height="5" fill="#a8def5" stroke="#2a7fb0"/><path d="M249,205 L249,214 L255,210 Z" fill="#fff" stroke="#333" stroke-width="0.9"/>
<path d="M344.5,196.5 L354,196.5 L358,200.5 L358,213 L344.5,213 Z" fill="#eef4f6" stroke="#aaa" stroke-width="0.8"/><circle cx="347.5" cy="203" r="1" fill="none" stroke="#777" stroke-width="0.6"/><circle cx="347.5" cy="207.5" r="1" fill="none" stroke="#777" stroke-width="0.6"/><path d="M350,203 L355,203 M350,207.5 L355,207.5" stroke="#777" stroke-width="0.7"/><path d="M356,216 L359,213 L359,216 Z" fill="#444"/>
<path d="M12.5,226 L27.5,226 L21.5,233 L21.5,240 L18.5,240 L18.5,233 Z" fill="none" stroke="#555" stroke-width="1.1"/>
<rect x="32.5" y="220.5" width="287" height="26" fill="#fff" stroke="#b8c4c8"/>
<path d="M306,229 L313.5,236.5 M313.5,229 L306,236.5" stroke="#888" stroke-width="1"/>
<path d="M325.55,230.25 L333.05,230.25 L329.3,234.75 Z" fill="#555"/>
<path d="M345,232.5 L356,232.5 M350.5,227 L350.5,238" stroke="#888" stroke-width="2.2"/>
<rect x="8" y="252" width="354" height="20" fill="#fafafa" />
<line x1="8" y1="272.3" x2="362" y2="272.3" stroke="#d8dcdc" stroke-width="1" />
<line x1="216.7" y1="252" x2="216.7" y2="1016" stroke="#e4e6ee" stroke-width="1" />
<line x1="304.5" y1="252" x2="304.5" y2="272" stroke="#e4e6e6" stroke-width="1" />
<line x1="362.3" y1="252" x2="362.3" y2="272" stroke="#e4e6e6" stroke-width="1" />
<rect x="225" y="257" width="9.5" height="12" fill="#c8ecf8" stroke="#d0a050" stroke-width="1.6"/>
<text x="238" y="267" font-size="12" fill="#333" text-anchor="start" font-weight="normal" textLength="59" lengthAdjust="spacingAndGlyphs" >Master Rep</text>
<path d="M12.5,280 L15,277 L15,286 L24,286 L22,288.5 L12.5,288.5 Z" fill="#f6e2b0" stroke="#c9a050" stroke-width="0.9"/>
<path d="M15.5,278 L18,275.5 L26,275.5 L26,283.5 L23.5,286 L15.5,286 Z" fill="#a8def5" stroke="#2a8fc0" stroke-width="0.9"/>
<text x="32.4" y="286.2" font-size="12" fill="#333" text-anchor="start" font-weight="normal" textLength="94.2" lengthAdjust="spacingAndGlyphs" >BELT_SANDER.ASM</text>
<path d="M19.5,293 L19.5,809" stroke="#cfcfcf" stroke-width="1"/>
<line x1="20" y1="299.7" x2="27" y2="299.7" stroke="#c8c8c8" stroke-width="1" />
<path d="M34.5,303.7 L37,296.2 L45,296.2 L42.5,303.7 Z" fill="none" stroke="#b0b0b0" stroke-width="1"/>
<text x="52" y="304.2" font-size="12" fill="#a89e8a" text-anchor="start" font-weight="normal" textLength="59" lengthAdjust="spacingAndGlyphs" >ASM_RIGHT</text>
<line x1="20" y1="317.7" x2="27" y2="317.7" stroke="#c8c8c8" stroke-width="1" />
<path d="M34.5,321.7 L37,314.2 L45,314.2 L42.5,321.7 Z" fill="none" stroke="#b0b0b0" stroke-width="1"/>
<text x="52" y="322.2" font-size="12" fill="#a89e8a" text-anchor="start" font-weight="normal" textLength="48" lengthAdjust="spacingAndGlyphs" >ASM_TOP</text>
<line x1="20" y1="335.7" x2="27" y2="335.7" stroke="#c8c8c8" stroke-width="1" />
<path d="M34.5,339.7 L37,332.2 L45,332.2 L42.5,339.7 Z" fill="none" stroke="#b0b0b0" stroke-width="1"/>
<text x="52" y="340.2" font-size="12" fill="#a89e8a" text-anchor="start" font-weight="normal" textLength="63" lengthAdjust="spacingAndGlyphs" >ASM_FRONT</text>
<line x1="20" y1="353.7" x2="27" y2="353.7" stroke="#c8c8c8" stroke-width="1" />
<path d="M37,348.7 L37,356.7 L46,356.7 M37,356.7 L33,360.7" fill="none" stroke="#b0b0b0" stroke-width="1"/>
<text x="52" y="358.2" font-size="12" fill="#a89e8a" text-anchor="start" font-weight="normal" textLength="76.5" lengthAdjust="spacingAndGlyphs" >ASM_DEF_CSYS</text>
<defs><clipPath id="treeclip"><rect x="0" y="270" width="216" height="760"/></clipPath></defs>
<g clip-path="url(#treeclip)">
<path d="M16.5,367.7 L21,371.7 L16.5,375.7 Z" fill="#444"/>
<path d="M32.5,370.2 L36,366.7 L45.5,366.7 L42,370.2 Z" fill="#d8f2fc" stroke="#2a8fc0" stroke-width="0.9"/><path d="M42,370.2 L45.5,366.7 L45.5,375.2 L42,378.7 Z" fill="#5fb0d8" stroke="#2a8fc0" stroke-width="0.9"/><rect x="32.5" y="370.2" width="9.5" height="8.5" fill="#a8def5" stroke="#2a8fc0" stroke-width="0.9"/>
<text x="52" y="376.2" font-size="12" fill="#333" text-anchor="start" font-weight="normal" textLength="80" lengthAdjust="spacingAndGlyphs" >BASE_PLATE.PRT</text>
<path d="M16.5,385.7 L21,389.7 L16.5,393.7 Z" fill="#444"/>
<rect x="32.0" y="383.7" width="14" height="14" fill="#fff" stroke="#b8a8d8" stroke-width="1"/>
<path d="M34.3,387.2 L36.7,387.2 M35.5,386.0 L35.5,388.4" stroke="#6a3aa8" stroke-width="1.3"/>
<path d="M34.3,393.2 L36.7,393.2 M35.5,392.0 L35.5,394.4" stroke="#6a3aa8" stroke-width="1.3"/>
<path d="M40.3,387.2 L42.7,387.2 M41.5,386.0 L41.5,388.4" stroke="#6a3aa8" stroke-width="1.3"/>
<path d="M40.3,393.2 L42.7,393.2 M41.5,392.0 L41.5,394.4" stroke="#6a3aa8" stroke-width="1.3"/>
<text x="52" y="394.2" font-size="12" fill="#333" text-anchor="start" font-weight="normal" textLength="114" lengthAdjust="spacingAndGlyphs" >Pattern 1 of FOOT.PRT</text>
<path d="M16.5,403.7 L21,407.7 L16.5,411.7 Z" fill="#444"/>
<path d="M32.5,406.2 L36,402.7 L45.5,402.7 L42,406.2 Z" fill="#d8f2fc" stroke="#2a8fc0" stroke-width="0.9"/><path d="M42,406.2 L45.5,402.7 L45.5,411.2 L42,414.7 Z" fill="#5fb0d8" stroke="#2a8fc0" stroke-width="0.9"/><rect x="32.5" y="406.2" width="9.5" height="8.5" fill="#a8def5" stroke="#2a8fc0" stroke-width="0.9"/>
<text x="52" y="412.2" font-size="12" fill="#333" text-anchor="start" font-weight="normal" textLength="71" lengthAdjust="spacingAndGlyphs" >HOUSING.PRT</text>
<path d="M16.5,421.7 L21,425.7 L16.5,429.7 Z" fill="#444"/>
<path d="M32.5,424.2 L36,420.7 L45.5,420.7 L42,424.2 Z" fill="#d8f2fc" stroke="#2a8fc0" stroke-width="0.9"/><path d="M42,424.2 L45.5,420.7 L45.5,429.2 L42,432.7 Z" fill="#5fb0d8" stroke="#2a8fc0" stroke-width="0.9"/><rect x="32.5" y="424.2" width="9.5" height="8.5" fill="#a8def5" stroke="#2a8fc0" stroke-width="0.9"/>
<rect x="52.5" y="421.2" width="4" height="6" fill="none" stroke="#333" stroke-width="0.9"/><rect x="54" y="423.7" width="1.2" height="1.2" fill="#333"/>
<text x="59" y="430.2" font-size="12" fill="#333" text-anchor="start" font-weight="normal" textLength="109" lengthAdjust="spacingAndGlyphs" >TENSIONER_ARM.PRT</text>
<path d="M16.5,439.7 L21,443.7 L16.5,447.7 Z" fill="#444"/>
<path d="M32.5,442.2 L36,438.7 L45.5,438.7 L42,442.2 Z" fill="#d8f2fc" stroke="#2a8fc0" stroke-width="0.9"/><path d="M42,442.2 L45.5,438.7 L45.5,447.2 L42,450.7 Z" fill="#5fb0d8" stroke="#2a8fc0" stroke-width="0.9"/><rect x="32.5" y="442.2" width="9.5" height="8.5" fill="#a8def5" stroke="#2a8fc0" stroke-width="0.9"/>
<rect x="52.5" y="439.2" width="4" height="6" fill="none" stroke="#333" stroke-width="0.9"/><rect x="54" y="441.7" width="1.2" height="1.2" fill="#333"/>
<text x="59" y="448.2" font-size="12" fill="#333" text-anchor="start" font-weight="normal" textLength="109" lengthAdjust="spacingAndGlyphs" >TENSIONER_ROD.PRT</text>
<path d="M16.5,457.7 L21,461.7 L16.5,465.7 Z" fill="#444"/>
<path d="M32.5,460.2 L36,456.7 L45.5,456.7 L42,460.2 Z" fill="#d8f2fc" stroke="#2a8fc0" stroke-width="0.9"/><path d="M42,460.2 L45.5,456.7 L45.5,465.2 L42,468.7 Z" fill="#5fb0d8" stroke="#2a8fc0" stroke-width="0.9"/><rect x="32.5" y="460.2" width="9.5" height="8.5" fill="#a8def5" stroke="#2a8fc0" stroke-width="0.9"/>
<rect x="52.5" y="457.2" width="4" height="6" fill="none" stroke="#333" stroke-width="0.9"/><rect x="54" y="459.7" width="1.2" height="1.2" fill="#333"/>
<text x="59.5" y="466.2" font-size="12" fill="#333" text-anchor="start" font-weight="normal" textLength="93.5" lengthAdjust="spacingAndGlyphs" >PULLEY_SMALL.PRT</text>
<path d="M16.5,475.7 L21,479.7 L16.5,483.7 Z" fill="#444"/>
<path d="M32.5,478.2 L36,474.7 L45.5,474.7 L42,478.2 Z" fill="#d8f2fc" stroke="#2a8fc0" stroke-width="0.9"/><path d="M42,478.2 L45.5,474.7 L45.5,483.2 L42,486.7 Z" fill="#5fb0d8" stroke="#2a8fc0" stroke-width="0.9"/><rect x="32.5" y="478.2" width="9.5" height="8.5" fill="#a8def5" stroke="#2a8fc0" stroke-width="0.9"/>
<rect x="52.5" y="475.2" width="4" height="6" fill="none" stroke="#333" stroke-width="0.9"/><rect x="54" y="477.7" width="1.2" height="1.2" fill="#333"/>
<text x="59.5" y="484.2" font-size="12" fill="#333" text-anchor="start" font-weight="normal" textLength="93.5" lengthAdjust="spacingAndGlyphs" >PULLEY_SMALL.PRT</text>
<path d="M16.5,493.7 L21,497.7 L16.5,501.7 Z" fill="#444"/>
<path d="M32.5,496.2 L36,492.7 L45.5,492.7 L42,496.2 Z" fill="#d8f2fc" stroke="#2a8fc0" stroke-width="0.9"/><path d="M42,496.2 L45.5,492.7 L45.5,501.2 L42,504.7 Z" fill="#5fb0d8" stroke="#2a8fc0" stroke-width="0.9"/><rect x="32.5" y="496.2" width="9.5" height="8.5" fill="#a8def5" stroke="#2a8fc0" stroke-width="0.9"/>
<text x="52" y="502.2" font-size="12" fill="#333" text-anchor="start" font-weight="normal" textLength="116" lengthAdjust="spacingAndGlyphs" >M8_SOCKET_HEAD.PRT</text>
<path d="M16.5,511.70000000000005 L21,515.7 L16.5,519.7 Z" fill="#444"/>
<path d="M32.5,514.2 L36,510.70000000000005 L45.5,510.70000000000005 L42,514.2 Z" fill="#d8f2fc" stroke="#2a8fc0" stroke-width="0.9"/><path d="M42,514.2 L45.5,510.70000000000005 L45.5,519.2 L42,522.7 Z" fill="#5fb0d8" stroke="#2a8fc0" stroke-width="0.9"/><rect x="32.5" y="514.2" width="9.5" height="8.5" fill="#a8def5" stroke="#2a8fc0" stroke-width="0.9"/>
<text x="52" y="520.2" font-size="12" fill="#333" text-anchor="start" font-weight="normal" textLength="116" lengthAdjust="spacingAndGlyphs" >M8_SOCKET_HEAD.PRT</text>
<path d="M16.5,529.7 L21,533.7 L16.5,537.7 Z" fill="#444"/>
<path d="M32.5,532.7 L35,529.7 L35,538.7 L44,538.7 L42,541.2 L32.5,541.2 Z" fill="#f6e2b0" stroke="#c9a050" stroke-width="0.9"/>
<path d="M35.5,530.7 L38,528.2 L46,528.2 L46,536.2 L43.5,538.7 L35.5,538.7 Z" fill="#a8def5" stroke="#2a8fc0" stroke-width="0.9"/>
<text x="52" y="538.2" font-size="12" fill="#333" text-anchor="start" font-weight="normal" textLength="94.7" lengthAdjust="spacingAndGlyphs" >MOTOR_ASSY.ASM</text>
<path d="M16.5,547.7 L21,551.7 L16.5,555.7 Z" fill="#444"/>
<path d="M32.5,550.2 L36,546.7 L45.5,546.7 L42,550.2 Z" fill="#d8f2fc" stroke="#2a8fc0" stroke-width="0.9"/><path d="M42,550.2 L45.5,546.7 L45.5,555.2 L42,558.7 Z" fill="#5fb0d8" stroke="#2a8fc0" stroke-width="0.9"/><rect x="32.5" y="550.2" width="9.5" height="8.5" fill="#a8def5" stroke="#2a8fc0" stroke-width="0.9"/>
<rect x="52.5" y="547.2" width="4" height="6" fill="none" stroke="#333" stroke-width="0.9"/><rect x="54" y="549.7" width="1.2" height="1.2" fill="#333"/>
<text x="59" y="556.2" font-size="12" fill="#333" text-anchor="start" font-weight="normal" textLength="50" lengthAdjust="spacingAndGlyphs" >TABLE.PRT</text>
<path d="M16.5,565.7 L21,569.7 L16.5,573.7 Z" fill="#444"/>
<path d="M32.5,568.2 L36,564.7 L45.5,564.7 L42,568.2 Z" fill="#d8f2fc" stroke="#2a8fc0" stroke-width="0.9"/><path d="M42,568.2 L45.5,564.7 L45.5,573.2 L42,576.7 Z" fill="#5fb0d8" stroke="#2a8fc0" stroke-width="0.9"/><rect x="32.5" y="568.2" width="9.5" height="8.5" fill="#a8def5" stroke="#2a8fc0" stroke-width="0.9"/>
<path d="M52.5,565.2 L56,565.2 L56,567.7 M52.5,565.2 L52.5,570.7 L55,570.7" fill="none" stroke="#333" stroke-width="0.9"/><rect x="55" y="567.7" width="3.8" height="4" fill="none" stroke="#333" stroke-width="0.9"/>
<text x="61" y="574.2" font-size="12" fill="#333" text-anchor="start" font-weight="normal" textLength="78" lengthAdjust="spacingAndGlyphs" >PULLEY_BIG.PRT</text>
<path d="M16.5,583.7 L21,587.7 L16.5,591.7 Z" fill="#444"/>
<rect x="32.0" y="581.7" width="14" height="14" fill="#fff" stroke="#b8a8d8" stroke-width="1"/>
<path d="M34.3,585.2 L36.7,585.2 M35.5,584.0 L35.5,586.4000000000001" stroke="#6a3aa8" stroke-width="1.3"/>
<path d="M34.3,591.2 L36.7,591.2 M35.5,590.0 L35.5,592.4000000000001" stroke="#6a3aa8" stroke-width="1.3"/>
<path d="M40.3,585.2 L42.7,585.2 M41.5,584.0 L41.5,586.4000000000001" stroke="#6a3aa8" stroke-width="1.3"/>
<path d="M40.3,591.2 L42.7,591.2 M41.5,590.0 L41.5,592.4000000000001" stroke="#6a3aa8" stroke-width="1.3"/>
<text x="52" y="592.2" font-size="12" fill="#333" text-anchor="start" font-weight="normal" textLength="166.5" lengthAdjust="spacingAndGlyphs" >Pattern 2 of M8_SOCKET_HEAD.P</text>
<path d="M16.5,601.7 L21,605.7 L16.5,609.7 Z" fill="#444"/>
<path d="M32.5,604.2 L36,600.7 L45.5,600.7 L42,604.2 Z" fill="#d8f2fc" stroke="#2a8fc0" stroke-width="0.9"/><path d="M42,604.2 L45.5,600.7 L45.5,609.2 L42,612.7 Z" fill="#5fb0d8" stroke="#2a8fc0" stroke-width="0.9"/><rect x="32.5" y="604.2" width="9.5" height="8.5" fill="#a8def5" stroke="#2a8fc0" stroke-width="0.9"/>
<path d="M33,602.7 Q37,603.7 33,606.7 Q37,607.7 33,610.7" fill="none" stroke="#333" stroke-width="0.9"/>
<text x="52" y="610.2" font-size="12" fill="#333" text-anchor="start" font-weight="normal" textLength="59" lengthAdjust="spacingAndGlyphs" >SPRING.PRT</text>
<line x1="20" y1="623.7" x2="27" y2="623.7" stroke="#c8c8c8" stroke-width="1" />
<path d="M33,628.7 L43,619.7" stroke="#aaa" stroke-width="7" stroke-linecap="round"/><circle cx="35.5" cy="627.7" r="2" fill="none" stroke="#666"/><circle cx="42.5" cy="621.2" r="2" fill="none" stroke="#666"/>
<path d="M52.5,619.2 L56,619.2 L56,621.7 M52.5,619.2 L52.5,624.7 L55,624.7" fill="none" stroke="#333" stroke-width="0.9"/><rect x="55" y="621.7" width="3.8" height="4" fill="none" stroke="#333" stroke-width="0.9"/>
<text x="61" y="628.2" font-size="12" fill="#333" text-anchor="start" font-weight="normal" textLength="27" lengthAdjust="spacingAndGlyphs" >Belt 1</text>
<path d="M16.5,637.7 L21,641.7 L16.5,645.7 Z" fill="#444"/>
<path d="M32.5,640.2 L36,636.7 L45.5,636.7 L42,640.2 Z" fill="#d8f2fc" stroke="#2a8fc0" stroke-width="0.9"/><path d="M42,640.2 L45.5,636.7 L45.5,645.2 L42,648.7 Z" fill="#5fb0d8" stroke="#2a8fc0" stroke-width="0.9"/><rect x="32.5" y="640.2" width="9.5" height="8.5" fill="#a8def5" stroke="#2a8fc0" stroke-width="0.9"/>
<rect x="52.5" y="637.2" width="4" height="6" fill="none" stroke="#333" stroke-width="0.9"/>
<text x="59" y="646.2" font-size="12" fill="#333" text-anchor="start" font-weight="normal" textLength="43" lengthAdjust="spacingAndGlyphs" >BELT.PRT</text>
<path d="M16.5,655.7 L21,659.7 L16.5,663.7 Z" fill="#444"/>
<path d="M32.5,658.2 L36,654.7 L45.5,654.7 L42,658.2 Z" fill="#d8f2fc" stroke="#2a8fc0" stroke-width="0.9"/><path d="M42,658.2 L45.5,654.7 L45.5,663.2 L42,666.7 Z" fill="#5fb0d8" stroke="#2a8fc0" stroke-width="0.9"/><rect x="32.5" y="658.2" width="9.5" height="8.5" fill="#a8def5" stroke="#2a8fc0" stroke-width="0.9"/>
<text x="52" y="664.2" font-size="12" fill="#333" text-anchor="start" font-weight="normal" textLength="67" lengthAdjust="spacingAndGlyphs" >M8_BOLT.PRT</text>
<path d="M16.5,673.7 L21,677.7 L16.5,681.7 Z" fill="#444"/>
<path d="M32.5,676.2 L36,672.7 L45.5,672.7 L42,676.2 Z" fill="#d8f2fc" stroke="#2a8fc0" stroke-width="0.9"/><path d="M42,676.2 L45.5,672.7 L45.5,681.2 L42,684.7 Z" fill="#5fb0d8" stroke="#2a8fc0" stroke-width="0.9"/><rect x="32.5" y="676.2" width="9.5" height="8.5" fill="#a8def5" stroke="#2a8fc0" stroke-width="0.9"/>
<rect x="52.5" y="673.2" width="4" height="6" fill="none" stroke="#333" stroke-width="0.9"/><rect x="54" y="675.7" width="1.2" height="1.2" fill="#333"/>
<text x="59" y="682.2" font-size="12" fill="#333" text-anchor="start" font-weight="normal" textLength="80" lengthAdjust="spacingAndGlyphs" >M8_SPACER.PRT</text>
<path d="M16.5,691.7 L21,695.7 L16.5,699.7 Z" fill="#444"/>
<path d="M32.5,694.2 L36,690.7 L45.5,690.7 L42,694.2 Z" fill="#d8f2fc" stroke="#2a8fc0" stroke-width="0.9"/><path d="M42,694.2 L45.5,690.7 L45.5,699.2 L42,702.7 Z" fill="#5fb0d8" stroke="#2a8fc0" stroke-width="0.9"/><rect x="32.5" y="694.2" width="9.5" height="8.5" fill="#a8def5" stroke="#2a8fc0" stroke-width="0.9"/>
<path d="M52.5,691.2 L56,691.2 L56,693.7 M52.5,691.2 L52.5,696.7 L55,696.7" fill="none" stroke="#333" stroke-width="0.9"/><rect x="55" y="693.7" width="3.8" height="4" fill="none" stroke="#333" stroke-width="0.9"/>
<text x="61" y="700.2" font-size="12" fill="#333" text-anchor="start" font-weight="normal" textLength="116" lengthAdjust="spacingAndGlyphs" >M8_SOCKET_HEAD.PRT</text>
<path d="M16.5,709.7 L21,713.7 L16.5,717.7 Z" fill="#444"/>
<path d="M32.5,712.2 L36,708.7 L45.5,708.7 L42,712.2 Z" fill="#d8f2fc" stroke="#2a8fc0" stroke-width="0.9"/><path d="M42,712.2 L45.5,708.7 L45.5,717.2 L42,720.7 Z" fill="#5fb0d8" stroke="#2a8fc0" stroke-width="0.9"/><rect x="32.5" y="712.2" width="9.5" height="8.5" fill="#a8def5" stroke="#2a8fc0" stroke-width="0.9"/>
<text x="52" y="718.2" font-size="12" fill="#333" text-anchor="start" font-weight="normal" textLength="112" lengthAdjust="spacingAndGlyphs" >HOUSING_COVER.PRT</text>
<path d="M16.5,727.7 L21,731.7 L16.5,735.7 Z" fill="#444"/>
<path d="M32.5,730.2 L36,726.7 L45.5,726.7 L42,730.2 Z" fill="#d8f2fc" stroke="#2a8fc0" stroke-width="0.9"/><path d="M42,730.2 L45.5,726.7 L45.5,735.2 L42,738.7 Z" fill="#5fb0d8" stroke="#2a8fc0" stroke-width="0.9"/><rect x="32.5" y="730.2" width="9.5" height="8.5" fill="#a8def5" stroke="#2a8fc0" stroke-width="0.9"/>
<text x="52" y="736.2" font-size="12" fill="#333" text-anchor="start" font-weight="normal" textLength="82" lengthAdjust="spacingAndGlyphs" >TOP_COVER.PRT</text>
<path d="M16.5,745.7 L21,749.7 L16.5,753.7 Z" fill="#444"/>
<path d="M32.5,748.2 L36,744.7 L45.5,744.7 L42,748.2 Z" fill="#d8f2fc" stroke="#2a8fc0" stroke-width="0.9"/><path d="M42,748.2 L45.5,744.7 L45.5,753.2 L42,756.7 Z" fill="#5fb0d8" stroke="#2a8fc0" stroke-width="0.9"/><rect x="32.5" y="748.2" width="9.5" height="8.5" fill="#a8def5" stroke="#2a8fc0" stroke-width="0.9"/>
<path d="M52.5,745.2 L56,745.2 L56,747.7 M52.5,745.2 L52.5,750.7 L55,750.7" fill="none" stroke="#333" stroke-width="0.9"/><rect x="55" y="747.7" width="3.8" height="4" fill="none" stroke="#333" stroke-width="0.9"/>
<text x="61" y="754.2" font-size="12" fill="#333" text-anchor="start" font-weight="normal" textLength="84" lengthAdjust="spacingAndGlyphs" >TABLE_KNOB.PRT</text>
<path d="M16.5,763.7 L21,767.7 L16.5,771.7 Z" fill="#444"/>
<path d="M32.5,766.2 L36,762.7 L45.5,762.7 L42,766.2 Z" fill="#d8f2fc" stroke="#2a8fc0" stroke-width="0.9"/><path d="M42,766.2 L45.5,762.7 L45.5,771.2 L42,774.7 Z" fill="#5fb0d8" stroke="#2a8fc0" stroke-width="0.9"/><rect x="32.5" y="766.2" width="9.5" height="8.5" fill="#a8def5" stroke="#2a8fc0" stroke-width="0.9"/>
<text x="52" y="772.2" font-size="12" fill="#333" text-anchor="start" font-weight="normal" textLength="62" lengthAdjust="spacingAndGlyphs" >M4_PAN.PRT</text>
<path d="M16.5,781.7 L21,785.7 L16.5,789.7 Z" fill="#444"/>
<path d="M32.5,784.2 L36,780.7 L45.5,780.7 L42,784.2 Z" fill="#d8f2fc" stroke="#2a8fc0" stroke-width="0.9"/><path d="M42,784.2 L45.5,780.7 L45.5,789.2 L42,792.7 Z" fill="#5fb0d8" stroke="#2a8fc0" stroke-width="0.9"/><rect x="32.5" y="784.2" width="9.5" height="8.5" fill="#a8def5" stroke="#2a8fc0" stroke-width="0.9"/>
<text x="52" y="790.2" font-size="12" fill="#333" text-anchor="start" font-weight="normal" textLength="170" lengthAdjust="spacingAndGlyphs" >M8_BOLT_TENSIONER&lt;M8_BOLT&gt;</text>
<path d="M16.5,799.7 L21,803.7 L16.5,807.7 Z" fill="#444"/>
<path d="M32.5,802.2 L36,798.7 L45.5,798.7 L42,802.2 Z" fill="#d8f2fc" stroke="#2a8fc0" stroke-width="0.9"/><path d="M42,802.2 L45.5,798.7 L45.5,807.2 L42,810.7 Z" fill="#5fb0d8" stroke="#2a8fc0" stroke-width="0.9"/><rect x="32.5" y="802.2" width="9.5" height="8.5" fill="#a8def5" stroke="#2a8fc0" stroke-width="0.9"/>
<text x="52" y="808.2" font-size="12" fill="#333" text-anchor="start" font-weight="normal" textLength="92" lengthAdjust="spacingAndGlyphs" >SMALL_SHAFT.PRT</text>
</g>
<path d="M11,820 L362,820" stroke="#5cc43c" stroke-width="1.6"/><path d="M11,816.5 L11,823.5 M362,816.5 L362,823.5" stroke="#5cc43c" stroke-width="1.2"/>
<rect x="8.5" y="1021.5" width="207.5" height="14.5" fill="#f4f4f4" stroke="#d0d4d4"/><rect x="23.5" y="1021.5" width="152.5" height="14.5" fill="#f6f6f6" stroke="#c8cccc"/><rect x="176" y="1022" width="26" height="14" fill="#dcdcdc"/><path d="M17,1025 L13.5,1028.7 L17,1032.5 Z" fill="#999"/><path d="M208,1025 L211.5,1028.7 L208,1032.5 Z" fill="#999"/><rect x="217.5" y="1021.5" width="145" height="14.5" fill="#fff" stroke="#d0d4d4"/><rect x="217.5" y="1021.5" width="14" height="14.5" fill="#f4f4f4" stroke="#d0d4d4"/><rect x="348.5" y="1021.5" width="14" height="14.5" fill="#f4f4f4" stroke="#d0d4d4"/><path d="M226,1025 L222.5,1028.7 L226,1032.5 Z" fill="#999"/><path d="M354,1025 L357.5,1028.7 L354,1032.5 Z" fill="#999"/>
<rect x="372" y="162" width="1548" height="880" fill="#e8e9ed" />
<rect x="934.5" y="169.5" width="421" height="31" fill="#f3f5f5" stroke="#b8c8c8" stroke-width="1"/>
<rect x="942.3" y="178" width="14" height="13" fill="#fff" stroke="#888" stroke-width="0.8"/><circle cx="949.8" cy="185" r="4.2" fill="none" stroke="#2a7fb0" stroke-width="1.3"/><path d="M952.8,188 L956.8,192" stroke="#888" stroke-width="2"/>
<circle cx="974.5" cy="183.5" r="5" fill="#fff" stroke="#2a7fb0" stroke-width="1.4"/><path d="M978.0,187 L982.0,191" stroke="#888" stroke-width="2.2"/>
<path d="M972.0,183.5 L977.0,183.5" stroke="#1f5f8a" stroke-width="1.6"/>
<path d="M974.5,181 L974.5,186" stroke="#1f5f8a" stroke-width="1.6"/>
<circle cx="1000.8" cy="183.5" r="5" fill="#fff" stroke="#2a7fb0" stroke-width="1.4"/><path d="M1004.3,187 L1008.3,191" stroke="#888" stroke-width="2.2"/>
<path d="M998.3,183.5 L1003.3,183.5" stroke="#1f5f8a" stroke-width="1.6"/>
<rect x="1020.5" y="177.5" width="15" height="15" fill="#e8f4fa" stroke="#888" stroke-width="0.8"/><path d="M1022,191 L1034,179 L1034,191 Z" fill="#6fbfe0"/><path d="M1022,191 L1034,179" stroke="#1f5f8a" stroke-width="1.3"/>
<circle cx="1051" cy="187" r="4.5" fill="#ccc"/><path d="M1053,182 L1058,178 L1060,178 L1060,188 L1055,190 Z" fill="#aaa"/>
<path d="M1073,182 L1077,178 L1087,178 L1087,188 L1083,192 L1073,192 Z M1073,182 L1083,182 L1083,192 M1083,182 L1087,178" fill="#fff" stroke="#1f6f9a" stroke-width="1.3"/><path d="M1083,182 L1087,178 L1087,188 L1083,192 Z" fill="#5fb0d8"/>
<path d="M1099.8,183 L1104.8,178 L1111.8,178 L1113.8,183 L1113.8,190 L1104.8,192 L1099.8,189 Z" fill="#c8ecf8" stroke="#5aa8d0"/><rect x="1108.8" y="186" width="5" height="6" fill="#fff" stroke="#666" stroke-width="0.7"/>
<rect x="1124.9" y="178" width="12" height="12" fill="#f4f4f4" stroke="#aaa" stroke-width="0.7"/><rect x="1129.9" y="185" width="10" height="7" rx="1" fill="#333"/><circle cx="1134.9" cy="188.5" r="2.2" fill="#888"/>
<path d="M1150.6,181 L1155.6,178 L1164.6,178 L1162.6,190 L1154.6,192 L1152.6,189 Z" fill="#bfe4f4" stroke="#88c0dc"/>
<path d="M1176.9,192 L1190.9,178" stroke="#1f5f8a" stroke-width="1.4"/><path d="M1178.9,192 L1190.9,180 L1190.9,192 Z" fill="#c8ecf8"/>
<path d="M1203,178 L1207,182 M1207,178 L1203,182 M1210,178 L1205,192 M1209,190 L1216,190 M1211,185 L1211,190" stroke="#8a6a30" stroke-width="1.1" fill="none"/>
<rect x="1228.4" y="178" width="10" height="6" fill="#f6efd8" stroke="#777" stroke-width="0.7"/><ellipse cx="1238.4" cy="190" rx="4" ry="2.3" fill="#444"/><path d="M1238.4,181 L1238.4,186 M1236.4,184 L1238.4,186 L1240.4,184" stroke="#444" fill="none"/>
<path d="M1257,191 L1262,185 L1268,187 M1262,185 L1260,179" stroke="#555" stroke-width="1" fill="none"/><circle cx="1257" cy="191" r="2.5" fill="#3a8fc8"/><circle cx="1268" cy="187" r="2.5" fill="#e86060"/><circle cx="1260" cy="179" r="2.5" fill="#5bb45b"/>
<path d="M1288,178 L1295,191 L1281,191 Z" fill="none" stroke="#bbb" stroke-width="2"/>
<rect x="1308.5" y="179.5" width="3.5" height="11" fill="#aaa"/><rect x="1315.0" y="179.5" width="3.5" height="11" fill="#aaa"/>
<path d="M1331.5,180 L1347.5,180 L1347.5,190 L1331.5,190 L1333.5,185 Z" fill="#ccc"/>
<defs><linearGradient id="gtable" x1="0" y1="0" x2="1" y2="0.6"><stop offset="0" stop-color="#cdcdcd"/><stop offset="0.5" stop-color="#c4c4c4"/><stop offset="1" stop-color="#cacaca"/></linearGradient><linearGradient id="gcap" x1="0" y1="0" x2="0" y2="1"><stop offset="0" stop-color="#404040"/><stop offset="0.4" stop-color="#333333"/><stop offset="1" stop-color="#242424"/></linearGradient><linearGradient id="gfoot" x1="0" y1="0" x2="1" y2="0"><stop offset="0" stop-color="#2a2a2a"/><stop offset="0.5" stop-color="#4a4a4a"/><stop offset="1" stop-color="#2e2e2e"/></linearGradient><linearGradient id="gpin" x1="0" y1="0" x2="0" y2="1"><stop offset="0" stop-color="#a8a4a0"/><stop offset="0.4" stop-color="#e0dcd8"/><stop offset="1" stop-color="#8a8684"/></linearGradient></defs>
<path d="M1002,826 L1418,824 L1390,906 L976,897 Z" fill="#939d90" stroke="#3a443a" stroke-width="0.8"/>
<path d="M976,896 L1390,905 L1389,913 L977,906.5 Z" fill="#a9b4a5" stroke="#3a443a" stroke-width="0.6"/>
<path d="M1418,824 L1390,906 L1389,912 L1419,829 Z" fill="#b4c0b0" stroke="#3a443a" stroke-width="0.6"/>
<rect x="981" y="906" width="23" height="19" rx="3" fill="url(#gfoot)"/><ellipse cx="992" cy="895" rx="12.6" ry="5.5" fill="#333"/><rect x="979.4" y="889.5" width="25.2" height="6" fill="#333"/><ellipse cx="992" cy="890" rx="12.6" ry="5" fill="#3a3a3a" stroke="#151515" stroke-width="0.8"/><ellipse cx="992" cy="890" rx="8" ry="3" fill="#262626"/>
<rect x="1362" y="911" width="23.4" height="19" rx="3" fill="url(#gfoot)"/><ellipse cx="1373" cy="901" rx="12.3" ry="5.5" fill="#333"/><rect x="1360.7" y="895" width="24.6" height="6" fill="#333"/><ellipse cx="1373" cy="896" rx="12.3" ry="5" fill="#3a3a3a" stroke="#151515" stroke-width="0.8"/><ellipse cx="1373" cy="896" rx="8" ry="3" fill="#262626"/>
<path d="M1284,833 L1362,833 L1358.5,843.5 L1281.7,843.5 Z" fill="#8e998a" stroke="#2a2a2a" stroke-width="0.7"/>
<path d="M1295,839 L1312,839 L1312,842.5 L1294,842.5 Z M1331,839 L1345,839 L1346.5,842.5 L1332,842.5 Z" fill="#f4f4f4"/>
<path d="M1289,834 L1285,843 M1296,834 Q1292,838 1294,843 M1345,834 L1349,843 M1352,834 Q1350,840 1354,843" fill="none" stroke="#2a2a2a" stroke-width="0.6"/>
<path d="M1311,833.5 L1332.7,833.5 L1332.7,841 Q1322,844 1311,841 Z" fill="#a8a4a0" stroke="#333" stroke-width="0.6"/>
<path d="M999.5,432 L999.5,375 C1001,330 1030,297 1064,295.5 C1090,295 1108,302 1122,313 L1418,565 Q1437,581 1437,604 L1441,785 C1441,800 1434,812 1420,820 L1395,833 L1008,829 C988,829 975.6,812 975.6,790 L975.6,627 L1250,627 C1262,625 1271,616 1272,604 C1273,596 1270,592 1265,587 L1090,440 L1010,437 C1004,437 999.5,434 999.5,432 Z" fill="#1e1f1f"/>
<path d="M1001,432 L1001,375 C1002.5,332 1031,298.5 1064,297 C1089,296.5 1107,303.5 1121,314.5 L1417,566.5 Q1435.5,582 1435.5,604 L1439.5,785 C1439.5,799 1433,810 1419,818 L1395,831 L1008,829 C988,829 977,812 977,790 L977,627 L1250,627 C1262,625 1271,616 1272,604 C1273,596 1270,592 1265,587 L1090,440 L1010,437 Z" fill="#2d2e2e"/>
<path d="M1008,432 L1008,378 C1010,338 1036,306 1064,305.7 C1088,305 1104,312 1116,322.5 L1404,565.5 Q1427,586 1427,608 L1431,786 C1431,798 1426,808 1414,814 L1395,830 L1008,829 C988,829 977,812 977,790 L977,627 L1250,627 C1262,625 1271,616 1272,604 C1273,596 1270,592 1265,587 L1090,440 L1010,437 Z" fill="#667062"/>
<defs><linearGradient id="gtopc" x1="0" y1="0" x2="0" y2="1"><stop offset="0" stop-color="#7e8a7a"/><stop offset="1" stop-color="#97a393"/></linearGradient></defs>
<path d="M1008,380 C1010,338 1036,306 1064,305.7 C1088,305 1104,312 1116,322.5 L1121,327 L1103,340 C1094,332 1082,327 1064,327 C1036,328 1011,355 1009,395 Z" fill="url(#gtopc)"/>
<path d="M1012,372 C1016,342 1038,316 1064,315 C1088,315 1104,322 1113,330" fill="none" stroke="#a8a8b0" stroke-width="0.7"/><path d="M1010,385 C1014,350 1038,322 1064,321 C1086,321 1100,328 1110,336" fill="none" stroke="#a8a8b0" stroke-width="0.7"/><path d="M1121,316 L1103,343" stroke="#a8a8b0" stroke-width="0.7"/>
<path d="M1009,432 L1009,395 C1011,355 1036,328 1064,327 C1082,327 1094,332 1104,339.4 L1396,584 Q1420,604 1420,626 L1420,800 C1420,818 1410,833 1392,833 L1008,829 C988,829 975.6,812 975.6,790 L975.6,627 L1250,627 C1262,625 1271,616 1272,604 C1273,596 1270,592 1265,587 L1100,449 C1094,442 1090,440 1084,440 L1022,438 C1014,437 1009,435 1009,432 Z" fill="#a7b2a3" stroke="#1a1f1a" stroke-width="0.9"/>
<path d="M1016,392 C1022,360 1042,334 1066,332.5 C1080,332.5 1090,336 1098,342" fill="none" stroke="#dfe6dc" stroke-width="2.5" opacity="0.9"/>
<path d="M1016,432 L1016,400 C1018,362 1040,339 1064,338 C1080,338 1091,343 1100,350 L1386,592 Q1410.6,610 1410.6,632 L1411,798 C1411,814 1404,828 1388,828 L1010,821 C994,821 983.7,810 983.7,797 L983.7,627 L1250,627 C1262,625 1271,616 1272,604 C1273,596 1270,592 1265,587 L1100,449 C1094,442 1090,440 1084,440 L1022,438 C1018,437 1016,435 1016,432 Z" fill="#939d90" stroke="#1a1f1a" stroke-width="0.8"/>
<path d="M1002,391 L1002,364 C1003.5,348 1010,334 1018,326 L1026,331 C1016,342 1009.5,362 1009.5,391 Z" fill="#98a494"/>
<path d="M1002,391 L1002,364 C1003.5,348 1010,334 1018,326" fill="none" stroke="#555d55" stroke-width="0.7"/>
<path d="M1002,391 L1009.5,391" stroke="#1a1f1a" stroke-width="0.8"/>
<path d="M1396,584 L1386,592 M1420,626 L1410.6,632 M1420,800 L1411,798 M1392,833 L1388,828" stroke="#1a1f1a" stroke-width="0.7"/>
<path d="M1022,437 L1086,438 C1093,438.5 1098,441 1102,444.5 L1266,582 C1277,591 1283,601 1283,613 L1283,632 C1283,655 1267,670.5 1242,670.5 L1034,670.5" fill="#9ba797" stroke="#1a1f1a" stroke-width="0.8"/>
<path d="M1034,441.5 L1084,442.5 C1090,443 1094,446 1098,449.5 L1261,587 C1268,593 1272,599 1272,607 L1272,614 C1272,622 1266,627 1256,627.5 L1034,627.5 Z" fill="#e8e9ed" stroke="#7a8478" stroke-width="0.6"/>
<path d="M1034,627.5 L1256,627.5 C1266,627 1272,622 1272,614 L1277,613 C1277,631 1268,640.5 1250,640.5 L1034,640.5 Z" fill="#303131" stroke="#1a1a1a" stroke-width="0.6"/>
<path d="M1034,627.5 L1256,627.5 C1266,627 1272,622 1272,614 L1273.5,614 C1273,624 1266,631 1254,631.5 L1034,631.5 Z" fill="#222"/>
<path d="M1034,640.5 L1250,640.5 C1268,640.5 1277,631 1277,613 L1279,611 L1279,630 C1279,650 1266,658.5 1244,658.5 L1034,658.5 Z" fill="#909b8c" stroke="#1a1f1a" stroke-width="0.8"/>
<path d="M1034,664 L1244,664 C1268,663 1280,650 1280,630" fill="none" stroke="#c8d2c4" stroke-width="2.2" opacity="0.9"/>
<path d="M1248,640.5 L1240,658.5 M1279,611 L1272,607" stroke="#1a1f1a" stroke-width="0.6"/>
<path d="M1056,359 L1056,347 M1071,359 L1071,347" stroke="#8a8a96" stroke-width="0.7"/>
<rect x="1056.5" y="346" width="14" height="13" fill="none" stroke="#a86a6a" stroke-width="1"/><circle cx="1063.5" cy="352.5" r="5" fill="#b8b8b8" stroke="#7a3a3a" stroke-width="0.9"/><path d="M1063.5,341 L1063.5,359 M1057,352.5 L1070,352.5" stroke="#6a2a2a" stroke-width="0.8"/>
<path d="M1052,375 L1052,367 Q1052,365 1054,365 L1069,365 Q1071,365 1072,366 C1076,363 1081,366 1080,371 C1086,377 1089,388 1088,398 C1087,406 1082,412 1077,415 L1075,422 Q1074.5,424 1072,424 L1055,424 Q1053,424 1052.5,422 L1051,415 C1046,411 1043,404 1043,394 C1043,386 1046,379 1052,375 Z" fill="#96a192" stroke="#0a0a0a" stroke-width="1.1"/>
<path d="M1054,377 C1048,382 1046,388 1046,394 C1046,403 1049,409 1054,413 M1078,377 C1083,382 1085,389 1085,397 C1084,405 1080,410 1075,413" fill="none" stroke="#222" stroke-width="0.8"/>
<path d="M1054,375 L1071,375 M1054,369 L1068,369" stroke="#222" stroke-width="0.8"/>
<path d="M1055,387 L1070,386" stroke="#f0f0f0" stroke-width="2.2"/><path d="M1064,390 L1070,377" stroke="#e8e8e8" stroke-width="2.5"/><path d="M1067,378 L1072,389" stroke="#333" stroke-width="0.8"/>
<circle cx="1063" cy="399.5" r="10.6" fill="#000"/>
<path d="M1070,376 L1073,371 M1076,377 L1078,372" stroke="#6a5ad0" stroke-width="1.6"/><circle cx="1074.5" cy="370" r="3" fill="none" stroke="#111" stroke-width="0.9"/>
<path d="M1000,342 C994,356 990,372 989,396 L988,452 L1000,452 L1000,430" fill="none" stroke="#a8a8a8" stroke-width="0.9"/><path d="M996,348 C991,364 987,384 986.5,410 L986.5,452" fill="none" stroke="#b8b8b8" stroke-width="0.8"/><path d="M1000,425 L994,452 M992,418 L988,440 M1000,440 L1008,440 L1008,432" fill="none" stroke="#b0b0b0" stroke-width="0.7"/><path d="M1000,352 C1010,320 1035,297 1064,294 C1090,293 1110,300 1124,310" fill="none" stroke="#aaa" stroke-width="0.8"/><path d="M1010,375 C1018,345 1040,318 1066,317 C1090,317 1106,328 1116,336" fill="none" stroke="#aab2a8" stroke-width="0.8"/>
<rect x="1025.5" y="436" width="9" height="192" fill="#1e1010"/><rect x="1025.8" y="436" width="1.4" height="192" fill="#c08080"/>
<path d="M1323,661 C1306,650 1298,636 1301,618 C1304,600 1320,588 1338,588 C1358,588 1375,603 1376,624 C1377,640 1368,654 1353,662 L1359,730 C1360,738 1354,744 1347,744 C1339,744 1334,738 1334,732 Z" fill="#939d90" stroke="#2c302c" stroke-width="1"/>
<path d="M1326,659 C1310,648 1303,634 1305,618 C1308,602 1322,592 1338,592 C1356,592 1371,606 1372,624 C1373,638 1364,652 1350,660 L1356,728 C1356,735 1352,740 1347,740 C1341,740 1337,736 1337,731 L1326,659" fill="none" stroke="#b4c0b0" stroke-width="1.6"/>
<circle cx="1346" cy="733" r="5.5" fill="#b8b0a8" stroke="#444" stroke-width="0.8"/>
<path d="M1322,618 L1349,616 L1352,622 L1348,655 L1326,655 Z" fill="#a9b4a5" stroke="#333" stroke-width="0.9"/>
<ellipse cx="1332" cy="640" rx="10" ry="11" fill="#050505"/><ellipse cx="1337" cy="629" rx="9" ry="8" fill="#050505"/>
<rect x="1339" y="629" width="25" height="19" rx="3" fill="url(#gpin)" stroke="#555" stroke-width="0.7"/><rect x="1360" y="630" width="4" height="17" fill="#222"/>
<rect x="1288" y="608" width="15" height="31" fill="#b8c2b4" stroke="#222" stroke-width="0.8"/><rect x="1290" y="610" width="11" height="27" fill="#d8e0d4"/><path d="M1291,614 Q1289,622 1292,628 Q1295,620 1296,614 Q1297,624 1300,628 Q1302,620 1300,613" fill="none" stroke="#e81010" stroke-width="1.6"/>
<path d="M1022,765 C1024,718 1058,678 1097,676 C1126,676 1148,690 1160,707 L1162,800 L1060,860 Z" fill="#343434" stroke="#151515" stroke-width="0.8"/>
<path d="M1159,707 L1270,713 L1249,758 L1144,755 Z" fill="#3a3a3a" stroke="#151515" stroke-width="0.8"/>
<path d="M1144,755 L1249,758 L1253,834 L1149,838 Z" fill="#363636" stroke="#151515" stroke-width="0.8"/>
<path d="M1270,713 L1271,787 L1253,834 L1249,758 Z" fill="#2c2c2c" stroke="#151515" stroke-width="0.8"/>
<path d="M1188,738 L1242,739 L1243,746 L1189,747 Z" fill="#111"/><path d="M1202,735 L1231,733 L1228,745 L1203,745 Z" fill="#e01818"/>
<ellipse cx="1080.5" cy="808" rx="77" ry="72" fill="url(#gcap)" stroke="#151515" stroke-width="1"/>
<path d="M1026,772 C1046,744 1100,736 1138,762" fill="none" stroke="#4a4a4a" stroke-width="5" opacity="0.7"/>
<ellipse cx="1077" cy="811" rx="58" ry="55" fill="#303030" stroke="#121212" stroke-width="1"/>
<ellipse cx="1077" cy="811" rx="52" ry="49" fill="none" stroke="#1a1a1a" stroke-width="0.8"/>
<path d="M1047.5,779.3 A45,42 0 0,1 1106.5,779.3" fill="none" stroke="#8c8c8c" stroke-width="5.2" stroke-linecap="round"/>
<path d="M1047.5,779.3 A45,42 0 0,1 1106.5,779.3" fill="none" stroke="#ececec" stroke-width="3.7" stroke-dasharray="5,6"/>
<path d="M1112.0,784.6 A45,42 0 0,1 1111.5,838.0" fill="none" stroke="#8c8c8c" stroke-width="5.2" stroke-linecap="round"/>
<path d="M1112.0,784.6 A45,42 0 0,1 1111.5,838.0" fill="none" stroke="#ececec" stroke-width="3.7" stroke-dasharray="4,5"/>
<path d="M1032.0,810.3 A45,42 0 0,1 1040.6,786.3" fill="none" stroke="#8c8c8c" stroke-width="5.2" stroke-linecap="round"/>
<path d="M1032.0,810.3 A45,42 0 0,1 1040.6,786.3" fill="none" stroke="#ececec" stroke-width="3.7" stroke-dasharray="4,4"/>
<path d="M1041.5,836.9 A45,42 0 0,1 1032.1,813.9" fill="none" stroke="#1a1a1a" stroke-width="5" stroke-linecap="round"/>
<path d="M1096.7,847.2 A42,41 0 0,1 1057.3,847.2" fill="none" stroke="#1a1a1a" stroke-width="5" stroke-linecap="round"/>
<path d="M1059.8,788.1 A30,28 0 0,1 1094.2,788.1" fill="none" stroke="#8c8c8c" stroke-width="5.2" stroke-linecap="round"/>
<path d="M1059.8,788.1 A30,28 0 0,1 1094.2,788.1" fill="none" stroke="#ececec" stroke-width="3.7" stroke-dasharray="5,3"/>
<path d="M1051.0,825.0 A30,28 0 0,1 1052.4,794.9" fill="none" stroke="#8c8c8c" stroke-width="5.2" stroke-linecap="round"/>
<path d="M1051.0,825.0 A30,28 0 0,1 1052.4,794.9" fill="none" stroke="#ececec" stroke-width="3.7" stroke-dasharray="4,5"/>
<path d="M1103.0,797.0 A30,28 0 0,1 1103.0,825.0" fill="none" stroke="#8c8c8c" stroke-width="5.2" stroke-linecap="round"/>
<path d="M1103.0,797.0 A30,28 0 0,1 1103.0,825.0" fill="none" stroke="#ececec" stroke-width="3.7" stroke-dasharray="3,5"/>
<path d="M1091.1,835.7 A30,28 0 0,1 1062.9,835.7" fill="none" stroke="#7a7a7a" stroke-width="5.2" stroke-linecap="round"/>
<path d="M1091.1,835.7 A30,28 0 0,1 1062.9,835.7" fill="none" stroke="#ececec" stroke-width="3.7" stroke-dasharray="3,6"/>
<path d="M1071.5,796.9 A16,15 0 0,1 1082.5,796.9" fill="none" stroke="#8c8c8c" stroke-width="5.2" stroke-linecap="round"/>
<path d="M1071.5,796.9 A16,15 0 0,1 1082.5,796.9" fill="none" stroke="#ececec" stroke-width="3.7" stroke-dasharray="6,2"/>
<path d="M1062.0,816.1 A16,15 0 0,1 1062.0,805.9" fill="none" stroke="#8c8c8c" stroke-width="5.2" stroke-linecap="round"/>
<path d="M1062.0,816.1 A16,15 0 0,1 1062.0,805.9" fill="none" stroke="#ececec" stroke-width="3.7" stroke-dasharray="3,3"/>
<path d="M1092.0,805.9 A16,15 0 0,1 1092.0,816.1" fill="none" stroke="#7a7a7a" stroke-width="5.2" stroke-linecap="round"/>
<path d="M1092.0,805.9 A16,15 0 0,1 1092.0,816.1" fill="none" stroke="#ececec" stroke-width="3.7" stroke-dasharray="2,5"/>
<path d="M1082.5,825.1 A16,15 0 0,1 1071.5,825.1" fill="none" stroke="#7a7a7a" stroke-width="5.2" stroke-linecap="round"/>
<path d="M1082.5,825.1 A16,15 0 0,1 1071.5,825.1" fill="none" stroke="#ececec" stroke-width="3.7" stroke-dasharray="2,6"/>
<ellipse cx="1077" cy="811" rx="6" ry="5" fill="#ddd"/>
<path d="M919,668.5 L1019.5,669.5 L1019,690 C1019,697 1015,704.5 1008,704.8 L928,703.5 C922,703.5 919.5,700 919.5,695 Z" fill="#050505"/>
<path d="M932,687.3 L996,687.3 L996,697 L932,697 C929,697 927.4,694.5 927.4,692 C927.4,689.5 929,687.3 932,687.3 Z" fill="#e8e9ed" stroke="#111" stroke-width="0.8"/>
<rect x="975" y="687.8" width="21" height="8.7" fill="#939d90"/><path d="M982.4,687.8 L982.4,696.5" stroke="#222" stroke-width="0.6"/>
<circle cx="1005" cy="692" r="6.5" fill="#050505"/>
<path d="M998,688 L1012,694 L996,730 L984,724 Z" fill="#050505"/>
<path d="M880,708 L882.5,706.5 L978,724 L977,742.5 L881,721 Z" fill="#a9b2bf" stroke="#3a3a3a" stroke-width="0.9"/>
<path d="M881,710 L978,727" stroke="#d0d6de" stroke-width="1.6"/>
<path d="M879,703 L1004,730 L999,749 L878,719 Z" fill="none" stroke="#b04848" stroke-width="0.5" opacity="0.7"/>
<ellipse cx="993" cy="733" rx="13.5" ry="15.5" fill="#a9b2bf" stroke="#3a3a3a" stroke-width="0.8"/>
<ellipse cx="989" cy="739" rx="11" ry="11" fill="#b9c2cc" stroke="#3a3a3a" stroke-width="0.8"/><circle cx="988.5" cy="738.5" r="4.8" fill="#8a8480" stroke="#333" stroke-width="0.8"/>
<path d="M863,636 L863,660 C863,665 866,667.5 871,667.5 L1073,670 C1077,670 1079,668 1080,665 L1100.5,608 L1100.5,584 C1100.5,580 1098,578 1095,578 L1078,640 Z" fill="#040404"/>
<path d="M893,574.5 L1092,577.8 C1098,578 1101,581 1100,585 L1080,640 C1078.5,644 1076,646.5 1071,646.5 L869,643 C864,643 862,640 863,636 L884,580 C886,576 889,574.5 893,574.5 Z" fill="url(#gtable)" stroke="#111" stroke-width="1"/>
<path d="M894.0,578.3 L900.8,578.3 L878.6,639.8 L871.8,639.8 Z" fill="#050505" stroke="#050505" stroke-width="2.6" stroke-linejoin="round"/>
<path d="M910.7,578.3 L917.5,578.3 L895.3,639.8 L888.5,639.8 Z" fill="#050505" stroke="#050505" stroke-width="2.6" stroke-linejoin="round"/>
<path d="M927.4,578.3 L934.2,578.3 L912.0,639.8 L905.2,639.8 Z" fill="#050505" stroke="#050505" stroke-width="2.6" stroke-linejoin="round"/>
<path d="M944.1,578.3 L950.9,578.3 L928.7,639.8 L921.9,639.8 Z" fill="#050505" stroke="#050505" stroke-width="2.6" stroke-linejoin="round"/>
<path d="M960.8,578.3 L967.6,578.3 L945.4,639.8 L938.6,639.8 Z" fill="#050505" stroke="#050505" stroke-width="2.6" stroke-linejoin="round"/>
<path d="M977.5,578.3 L984.3,578.3 L962.1,639.8 L955.3,639.8 Z" fill="#050505" stroke="#050505" stroke-width="2.6" stroke-linejoin="round"/>
<path d="M994.2,578.3 L1001.0,578.3 L978.8,639.8 L972.0,639.8 Z" fill="#050505" stroke="#050505" stroke-width="2.6" stroke-linejoin="round"/>
<path d="M1019.5,573 L1035,573 L1035,603 L1050.6,603.7 L1045,619.2 L1003.4,619.2 Z" fill="#e8e9ed"/>
<path d="M1035,603 L1050.6,603.7 L1045,619.2 L1003.4,619.2" fill="none" stroke="#222" stroke-width="0.8"/>
<path d="M1019.5,575.5 L1013.9,602.7 L1007.4,619.2 L1003,619.2 Z" fill="#050505"/>
<path d="M1018,603.2 L1050.6,603.7 L1048,610.8 L1018,610.8 Z" fill="#050505"/>
<rect x="1025.5" y="570" width="9" height="49" fill="#1e1010"/><rect x="1025.8" y="570" width="1.4" height="49" fill="#c08080"/>
<path d="M881,250.5 L881,279.5 Q881,281.5 883,280.5 L888.8,274.8 L894.2,285 Q896.5,288 899,285.3 L893.6,273 L902.5,272.6 Q904.5,272 903,270.5 Z" fill="#f2f2f2" stroke="#050505" stroke-width="2" stroke-linejoin="round"/>
<rect x="0" y="1042" width="1920" height="1.5" fill="#b0bcbc" />
<rect x="0" y="1043.5" width="1920" height="37" fill="#fdfdfd" />
<rect x="6.5" y="1052.5" width="21" height="23" fill="#e4e4e4" stroke="#b8b8b8"/><rect x="10" y="1057" width="14" height="14" fill="#fff" stroke="#555" stroke-width="0.9"/><rect x="10" y="1060" width="4" height="11" fill="#a8def5" stroke="#2a7fb0" stroke-width="0.8"/><ellipse cx="20" cy="1069.5" rx="4" ry="2.4" fill="#444"/><circle cx="20" cy="1069.5" r="1" fill="#fff"/>
<circle cx="43" cy="1063.7" r="6.5" fill="#3a9ad8"/><ellipse cx="43" cy="1063.7" rx="9" ry="4" fill="none" stroke="#333" stroke-width="1" transform="rotate(-40 43 1063.7)"/>
<rect x="61.5" y="1056.5" width="15.5" height="15.5" rx="1" fill="#e8f2f8" stroke="#2a6f9a" stroke-width="1.1"/>
<line x1="89.6" y1="1052" x2="89.6" y2="1076" stroke="#ccc" stroke-width="1" />
<line x1="1490.5" y1="1046" x2="1490.5" y2="1076" stroke="#ddd" stroke-width="1" />
<line x1="1495" y1="1046" x2="1495" y2="1076" stroke="#ddd" stroke-width="1" />
<path d="M1501,1057 L1504,1053 L1508,1053 L1508,1068 L1501,1068 Z M1512,1053 L1516,1053 L1519,1057 L1519,1068 L1512,1068 Z" fill="#333"/><rect x="1507" y="1058" width="6" height="4" fill="#555"/>
<path d="M1525.0,1057.7 L1532.0,1057.7 L1528.5,1061.7 Z" fill="#555"/>
<line x1="1539" y1="1046" x2="1539" y2="1076" stroke="#ddd" stroke-width="1" />
<rect x="1545.5" y="1056" width="14.5" height="11" fill="none" stroke="#333" stroke-width="1.1" stroke-dasharray="2.5,1.5"/>
<path d="M1568.0,1059.5 L1575.0,1059.5 L1571.5,1063.5 Z" fill="#555"/>
<rect x="1585.5" y="1054.5" width="15" height="14" fill="none" stroke="#aaa" stroke-dasharray="2,1"/><path d="M1594,1060 L1594,1068 L1601,1065 Z" fill="#fff" stroke="#999" stroke-width="0.8"/>
<rect x="1607.5" y="1048.5" width="39.5" height="27.5" fill="#f4f4f4" stroke="#b8b8b8"/>
<path d="M1618,1057 L1622,1053 L1636,1053 L1636,1066 L1632,1070 L1618,1070 Z" fill="#fff" stroke="#222" stroke-width="1.1"/><path d="M1618,1057 L1632,1057 L1632,1070 M1632,1057 L1636,1053" fill="none" stroke="#222"/><rect x="1621" y="1060" width="7" height="7" fill="#f3dfae" stroke="#c9a050" stroke-width="0.8"/><rect x="1623" y="1058" width="7" height="7" fill="#6fc8f0" stroke="#2a7fb0" stroke-width="0.8"/>
<rect x="1737.5" y="1050.5" width="164.5" height="22" fill="#f8f8f8" stroke="#b8b8b8"/><line x1="1886" y1="1050.5" x2="1886" y2="1072.5" stroke="#b8b8b8"/>
<text x="1745" y="1066" font-size="12" fill="#333" text-anchor="start" font-weight="normal" textLength="52" lengthAdjust="spacingAndGlyphs" >Geometry</text>
<path d="M1890.5,1059.5 L1897.5,1059.5 L1894,1063.5 Z" fill="#444"/>
</svg>
</body></html>
